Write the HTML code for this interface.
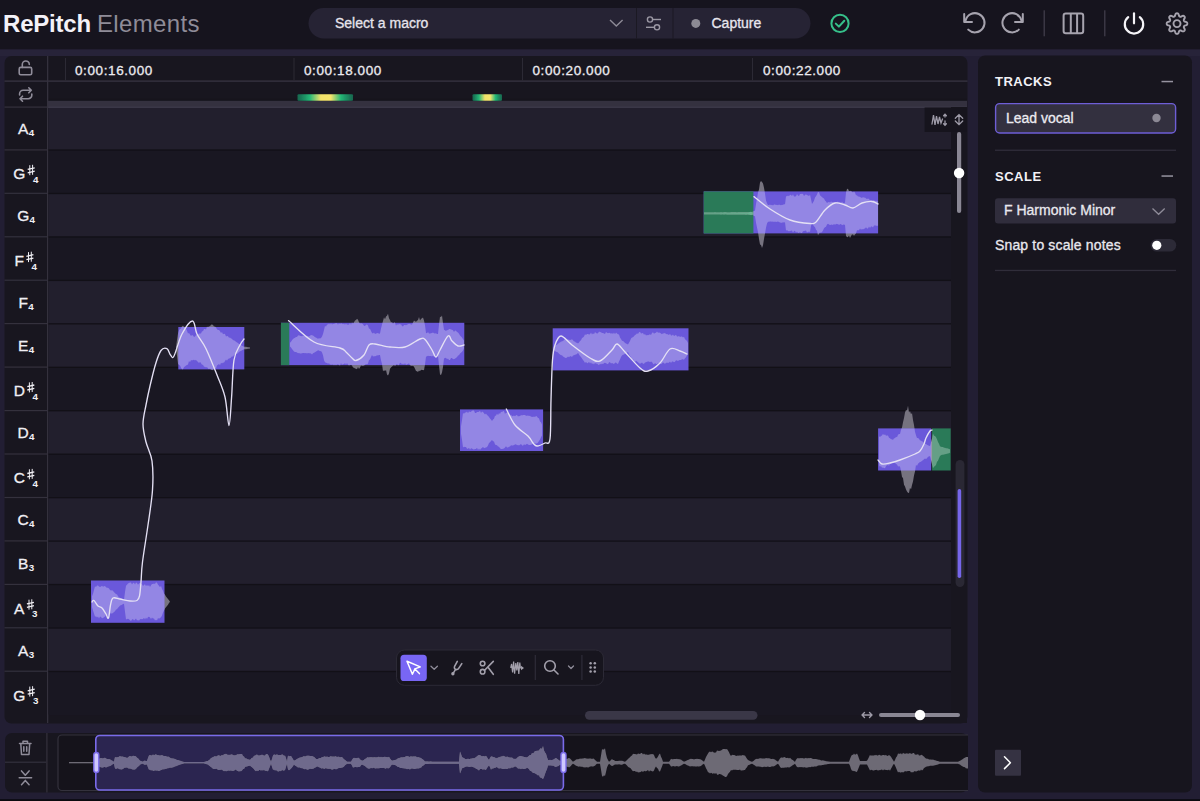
<!DOCTYPE html>
<html><head><meta charset="utf-8"><title>RePitch Elements</title>
<style>
html,body{margin:0;padding:0;width:1200px;height:801px;overflow:hidden;background:#110f17;}
svg{display:block;font-family:"Liberation Sans", sans-serif;}
.m{stroke:currentColor;stroke-width:0.3px;}
</style></head><body>
<svg width="1200" height="801" viewBox="0 0 1200 801">

<rect x="0" y="0" width="1200" height="801" fill="#221e33"/>
<rect x="0" y="0" width="1200" height="49.5" fill="#16141e"/>
<rect x="0" y="49.5" width="1200" height="6.5" fill="#272339"/>
<rect x="0" y="799.2" width="1200" height="1.8" fill="#0b0a0f"/>
<text x="3" y="32.4" font-size="24" font-weight="bold" fill="#f4f2f8" letter-spacing="-0.2">RePitch</text>
<text x="97" y="32.4" font-size="24" fill="#8f8c98" letter-spacing="0.35">Elements</text>
<rect x="308.5" y="8" width="502" height="30.5" rx="15.25" fill="#262334"/>
<rect x="636" y="8" width="1" height="30.5" fill="#1b1923"/>
<rect x="672.5" y="8" width="1" height="30.5" fill="#1b1923"/>
<text class="m" color="#e6e4ec" x="335" y="27.7" font-size="14" fill="#e6e4ec">Select a macro</text>
<path d="M610,20 L616.3,26 L622.6,20" fill="none" stroke="#8d8a96" stroke-width="1.4"/>
<g fill="none" stroke="#9b98a4" stroke-width="1.4"><circle cx="650" cy="19.5" r="2.6"/><path d="M652.6,19.5 H661"/><circle cx="657" cy="27.3" r="2.6"/><path d="M646,27.3 H654.4"/></g>
<circle cx="695.8" cy="23.4" r="4.5" fill="#8c8a94"/>
<text class="m" color="#e8e6ee" x="711.5" y="27.8" font-size="14" fill="#e8e6ee">Capture</text>
<circle cx="840" cy="23.4" r="8.6" fill="none" stroke="#36c08a" stroke-width="2"/>
<path d="M835.8,23.6 L838.9,26.6 L844.3,20.8" fill="none" stroke="#36c08a" stroke-width="2" stroke-linecap="round" stroke-linejoin="round"/>
<g fill="none" stroke="#a6a3ae" stroke-width="2" stroke-linecap="round" stroke-linejoin="round"><path d="M968.2,29.6 A9.6,9.6 0 1 0 965.6,20.6"/><path d="M964.2,14 V22 H972"/><path d="M1018.8,29.6 A9.6,9.6 0 1 1 1021.4,20.6"/><path d="M1022.8,14 V22 H1015"/></g>
<rect x="1043.5" y="10.3" width="1.5" height="26" fill="#3a3744"/>
<rect x="1104" y="10.3" width="1.5" height="26" fill="#3a3744"/>
<g fill="none" stroke="#a6a3ae" stroke-width="2"><rect x="1063.6" y="13.6" width="19.6" height="19.6" rx="2.2"/><path d="M1070.8,13.6 V33.2 M1077.1,13.6 V33.2"/></g>
<g fill="none" stroke="#f5f4f8" stroke-width="2.2" stroke-linecap="round"><path d="M1128.2,17.2 A9.2,9.2 0 1 0 1139.8,17.2"/><path d="M1134,13.4 V23.3"/></g>
<g fill="none" stroke="#a6a3ae" stroke-width="1.9" stroke-linejoin="round"><path d="M1187.30,23.60 L1187.28,23.92 L1187.20,24.24 L1187.06,24.55 L1186.80,24.84 L1186.40,25.09 L1185.87,25.29 L1185.31,25.46 L1184.83,25.61 L1184.49,25.77 L1184.26,25.96 L1184.10,26.15 L1183.98,26.36 L1183.89,26.58 L1183.82,26.81 L1183.80,27.06 L1183.83,27.36 L1183.96,27.71 L1184.19,28.16 L1184.47,28.68 L1184.70,29.20 L1184.81,29.65 L1184.78,30.04 L1184.67,30.36 L1184.50,30.64 L1184.28,30.88 L1184.04,31.10 L1183.76,31.27 L1183.44,31.38 L1183.05,31.41 L1182.60,31.30 L1182.08,31.07 L1181.56,30.79 L1181.11,30.56 L1180.76,30.43 L1180.46,30.40 L1180.21,30.42 L1179.98,30.49 L1179.76,30.58 L1179.55,30.70 L1179.36,30.86 L1179.17,31.09 L1179.01,31.43 L1178.86,31.91 L1178.69,32.47 L1178.49,33.00 L1178.24,33.40 L1177.95,33.66 L1177.64,33.80 L1177.32,33.88 L1177.00,33.90 L1176.68,33.88 L1176.36,33.80 L1176.05,33.66 L1175.76,33.40 L1175.51,33.00 L1175.31,32.47 L1175.14,31.91 L1174.99,31.43 L1174.83,31.09 L1174.64,30.86 L1174.45,30.70 L1174.24,30.58 L1174.02,30.49 L1173.79,30.42 L1173.54,30.40 L1173.24,30.43 L1172.89,30.56 L1172.44,30.79 L1171.92,31.07 L1171.40,31.30 L1170.95,31.41 L1170.56,31.38 L1170.24,31.27 L1169.96,31.10 L1169.72,30.88 L1169.50,30.64 L1169.33,30.36 L1169.22,30.04 L1169.19,29.65 L1169.30,29.20 L1169.53,28.68 L1169.81,28.16 L1170.04,27.71 L1170.17,27.36 L1170.20,27.06 L1170.18,26.81 L1170.11,26.58 L1170.02,26.36 L1169.90,26.15 L1169.74,25.96 L1169.51,25.77 L1169.17,25.61 L1168.69,25.46 L1168.13,25.29 L1167.60,25.09 L1167.20,24.84 L1166.94,24.55 L1166.80,24.24 L1166.72,23.92 L1166.70,23.60 L1166.72,23.28 L1166.80,22.96 L1166.94,22.65 L1167.20,22.36 L1167.60,22.11 L1168.13,21.91 L1168.69,21.74 L1169.17,21.59 L1169.51,21.43 L1169.74,21.24 L1169.90,21.05 L1170.02,20.84 L1170.11,20.62 L1170.18,20.39 L1170.20,20.14 L1170.17,19.84 L1170.04,19.49 L1169.81,19.04 L1169.53,18.52 L1169.30,18.00 L1169.19,17.55 L1169.22,17.16 L1169.33,16.84 L1169.50,16.56 L1169.72,16.32 L1169.96,16.10 L1170.24,15.93 L1170.56,15.82 L1170.95,15.79 L1171.40,15.90 L1171.92,16.13 L1172.44,16.41 L1172.89,16.64 L1173.24,16.77 L1173.54,16.80 L1173.79,16.78 L1174.02,16.71 L1174.24,16.62 L1174.45,16.50 L1174.64,16.34 L1174.83,16.11 L1174.99,15.77 L1175.14,15.29 L1175.31,14.73 L1175.51,14.20 L1175.76,13.80 L1176.05,13.54 L1176.36,13.40 L1176.68,13.32 L1177.00,13.30 L1177.32,13.32 L1177.64,13.40 L1177.95,13.54 L1178.24,13.80 L1178.49,14.20 L1178.69,14.73 L1178.86,15.29 L1179.01,15.77 L1179.17,16.11 L1179.36,16.34 L1179.55,16.50 L1179.76,16.62 L1179.98,16.71 L1180.21,16.78 L1180.46,16.80 L1180.76,16.77 L1181.11,16.64 L1181.56,16.41 L1182.08,16.13 L1182.60,15.90 L1183.05,15.79 L1183.44,15.82 L1183.76,15.93 L1184.04,16.10 L1184.28,16.32 L1184.50,16.56 L1184.67,16.84 L1184.78,17.16 L1184.81,17.55 L1184.70,18.00 L1184.47,18.52 L1184.19,19.04 L1183.96,19.49 L1183.83,19.84 L1183.80,20.14 L1183.82,20.39 L1183.89,20.62 L1183.98,20.84 L1184.10,21.05 L1184.26,21.24 L1184.49,21.43 L1184.83,21.59 L1185.31,21.74 L1185.87,21.91 L1186.40,22.11 L1186.80,22.36 L1187.06,22.65 L1187.20,22.96 L1187.28,23.28Z"/><circle cx="1177" cy="23.6" r="3.5"/></g>
<rect x="4.5" y="56" width="963" height="667.5" rx="7" fill="#18161f"/>
<rect x="4.5" y="80.5" width="963" height="1.2" fill="#3a3745"/>
<rect x="48" y="98.8" width="919" height="2" fill="#16141c"/>
<rect x="48" y="100.8" width="919" height="7.2" fill="#34313f"/><rect x="48" y="106.3" width="919" height="1.7" fill="#3a3747"/>
<rect x="4.5" y="106.5" width="43" height="1.2" fill="#34313d"/>
<rect x="47" y="56" width="1.3" height="667" fill="#34313d"/>
<rect x="65" y="58" width="1" height="22.5" fill="#2c2a35"/>
<rect x="293.5" y="58" width="1" height="22.5" fill="#2c2a35"/>
<rect x="522" y="58" width="1" height="22.5" fill="#2c2a35"/>
<rect x="752" y="58" width="1" height="22.5" fill="#2c2a35"/>
<text class="m" color="#ecebf0" x="75" y="75" font-size="13.5" fill="#ecebf0" letter-spacing="0.6">0:00:16.000</text>
<text class="m" color="#ecebf0" x="304" y="75" font-size="13.5" fill="#ecebf0" letter-spacing="0.6">0:00:18.000</text>
<text class="m" color="#ecebf0" x="532.5" y="75" font-size="13.5" fill="#ecebf0" letter-spacing="0.6">0:00:20.000</text>
<text class="m" color="#ecebf0" x="763" y="75" font-size="13.5" fill="#ecebf0" letter-spacing="0.6">0:00:22.000</text>
<defs><linearGradient id="heat" x1="0" x2="1" y1="0" y2="0"><stop offset="0" stop-color="#167a5a" stop-opacity="0.8"/><stop offset="0.22" stop-color="#24b877"/><stop offset="0.42" stop-color="#f2e26a"/><stop offset="0.6" stop-color="#f4e46c"/><stop offset="0.78" stop-color="#24b877"/><stop offset="1" stop-color="#167a5a" stop-opacity="0.8"/></linearGradient><filter id="blur1" x="-20%" y="-60%" width="140%" height="220%"><feGaussianBlur stdDeviation="0.7"/></filter></defs>
<rect x="297.5" y="94.3" width="55.5" height="6.4" rx="1" fill="url(#heat)" filter="url(#blur1)"/>
<rect x="472.5" y="94.3" width="29.5" height="6.4" rx="1" fill="url(#heat)" filter="url(#blur1)"/>
<g fill="none" stroke="#8f8c99" stroke-width="1.6" stroke-linecap="round" stroke-linejoin="round"><rect x="19.2" y="67.4" width="12.5" height="7.4" rx="1.5"/><path d="M22.3,67.4 V64.6 A3.5,3.5 0 0 1 29.3,64.4"/><path d="M19.6,95 V93.8 A3.5,3.5 0 0 1 23.1,90.3 H31.3 M28.8,87.8 L31.3,90.3 L28.8,92.8"/><path d="M31.8,94 V95.2 A3.5,3.5 0 0 1 28.3,98.7 H20 M22.5,96.2 L20,98.7 L22.5,101.2"/></g>
<clipPath id="gridclip"><rect x="48.3" y="108" width="903" height="615.5"/></clipPath>
<g clip-path="url(#gridclip)">
<rect x="48.3" y="106.4" width="903" height="44.1" rx="2" fill="#221f2d"/>
<rect x="48.3" y="149.9" width="903" height="44.1" rx="2" fill="#191722"/>
<rect x="48.3" y="149.40" width="903" height="1.3" fill="#121017"/>
<rect x="48.3" y="193.3" width="903" height="44.1" rx="2" fill="#221f2d"/>
<rect x="48.3" y="192.85" width="903" height="1.3" fill="#121017"/>
<rect x="48.3" y="236.8" width="903" height="44.1" rx="2" fill="#191722"/>
<rect x="48.3" y="236.30" width="903" height="1.3" fill="#121017"/>
<rect x="48.3" y="280.2" width="903" height="44.1" rx="2" fill="#221f2d"/>
<rect x="48.3" y="279.75" width="903" height="1.3" fill="#121017"/>
<rect x="48.3" y="323.6" width="903" height="44.1" rx="2" fill="#221f2d"/>
<rect x="48.3" y="323.20" width="903" height="1.3" fill="#121017"/>
<rect x="48.3" y="367.1" width="903" height="44.1" rx="2" fill="#191722"/>
<rect x="48.3" y="366.65" width="903" height="1.3" fill="#121017"/>
<rect x="48.3" y="410.6" width="903" height="44.1" rx="2" fill="#221f2d"/>
<rect x="48.3" y="410.10" width="903" height="1.3" fill="#121017"/>
<rect x="48.3" y="454.0" width="903" height="44.1" rx="2" fill="#191722"/>
<rect x="48.3" y="453.55" width="903" height="1.3" fill="#121017"/>
<rect x="48.3" y="497.5" width="903" height="44.1" rx="2" fill="#221f2d"/>
<rect x="48.3" y="497.00" width="903" height="1.3" fill="#121017"/>
<rect x="48.3" y="540.9" width="903" height="44.1" rx="2" fill="#221f2d"/>
<rect x="48.3" y="540.45" width="903" height="1.3" fill="#121017"/>
<rect x="48.3" y="584.4" width="903" height="44.1" rx="2" fill="#191722"/>
<rect x="48.3" y="583.90" width="903" height="1.3" fill="#121017"/>
<rect x="48.3" y="627.8" width="903" height="44.1" rx="2" fill="#221f2d"/>
<rect x="48.3" y="627.35" width="903" height="1.3" fill="#121017"/>
<rect x="48.3" y="671.2" width="903" height="44.1" rx="2" fill="#191722"/>
<rect x="48.3" y="670.80" width="903" height="1.3" fill="#121017"/>
</g>
<text x="18.0" y="133.7" font-size="15.5" fill="#f0eff4" class="m" color="#f0eff4">A</text>
<text x="28.7" y="135.7" font-size="9.8" font-weight="bold" fill="#f0eff4">4</text>
<rect x="4.5" y="149.3" width="43" height="1.2" fill="#34313d"/>
<text x="13.3" y="179.2" font-size="15.5" fill="#f0eff4" class="m" color="#f0eff4">G</text>
<path d="M29.8,165.2 V175.2 M32.6,164.8 V174.8" stroke="#f0eff4" stroke-width="1.0" fill="none"/>
<path d="M27.7,169.4 L34.7,167.8 M27.7,172.8 L34.7,171.2" stroke="#f0eff4" stroke-width="1.35" fill="none"/>
<text x="32.9" y="182.8" font-size="9.8" font-weight="bold" fill="#f0eff4">4</text>
<rect x="4.5" y="192.7" width="43" height="1.2" fill="#34313d"/>
<text x="17.2" y="220.8" font-size="15.5" fill="#f0eff4" class="m" color="#f0eff4">G</text>
<text x="29.5" y="222.8" font-size="9.8" font-weight="bold" fill="#f0eff4">4</text>
<rect x="4.5" y="236.2" width="43" height="1.2" fill="#34313d"/>
<text x="14.6" y="266.1" font-size="15.5" fill="#f0eff4" class="m" color="#f0eff4">F</text>
<path d="M28.5,252.1 V262.1 M31.3,251.7 V261.7" stroke="#f0eff4" stroke-width="1.0" fill="none"/>
<path d="M26.4,256.3 L33.4,254.7 M26.4,259.7 L33.4,258.1" stroke="#f0eff4" stroke-width="1.35" fill="none"/>
<text x="31.6" y="269.7" font-size="9.8" font-weight="bold" fill="#f0eff4">4</text>
<rect x="4.5" y="279.6" width="43" height="1.2" fill="#34313d"/>
<text x="18.5" y="307.8" font-size="15.5" fill="#f0eff4" class="m" color="#f0eff4">F</text>
<text x="28.2" y="309.8" font-size="9.8" font-weight="bold" fill="#f0eff4">4</text>
<rect x="4.5" y="323.0" width="43" height="1.2" fill="#34313d"/>
<text x="18.0" y="351.3" font-size="15.5" fill="#f0eff4" class="m" color="#f0eff4">E</text>
<text x="28.7" y="353.3" font-size="9.8" font-weight="bold" fill="#f0eff4">4</text>
<rect x="4.5" y="366.5" width="43" height="1.2" fill="#34313d"/>
<text x="13.7" y="396.4" font-size="15.5" fill="#f0eff4" class="m" color="#f0eff4">D</text>
<path d="M29.4,382.4 V392.4 M32.2,382.0 V392.0" stroke="#f0eff4" stroke-width="1.0" fill="none"/>
<path d="M27.3,386.6 L34.3,385.0 M27.3,390.0 L34.3,388.4" stroke="#f0eff4" stroke-width="1.35" fill="none"/>
<text x="32.5" y="400.0" font-size="9.8" font-weight="bold" fill="#f0eff4">4</text>
<rect x="4.5" y="410.0" width="43" height="1.2" fill="#34313d"/>
<text x="17.6" y="438.4" font-size="15.5" fill="#f0eff4" class="m" color="#f0eff4">D</text>
<text x="29.1" y="440.4" font-size="9.8" font-weight="bold" fill="#f0eff4">4</text>
<rect x="4.5" y="453.4" width="43" height="1.2" fill="#34313d"/>
<text x="13.7" y="483.3" font-size="15.5" fill="#f0eff4" class="m" color="#f0eff4">C</text>
<path d="M29.4,469.3 V479.3 M32.2,468.9 V478.9" stroke="#f0eff4" stroke-width="1.0" fill="none"/>
<path d="M27.3,473.5 L34.3,471.9 M27.3,476.9 L34.3,475.3" stroke="#f0eff4" stroke-width="1.35" fill="none"/>
<text x="32.5" y="486.9" font-size="9.8" font-weight="bold" fill="#f0eff4">4</text>
<rect x="4.5" y="496.9" width="43" height="1.2" fill="#34313d"/>
<text x="17.6" y="525.4" font-size="15.5" fill="#f0eff4" class="m" color="#f0eff4">C</text>
<text x="29.1" y="527.4" font-size="9.8" font-weight="bold" fill="#f0eff4">4</text>
<rect x="4.5" y="540.3" width="43" height="1.2" fill="#34313d"/>
<text x="18.0" y="568.9" font-size="15.5" fill="#f0eff4" class="m" color="#f0eff4">B</text>
<text x="28.7" y="570.9" font-size="9.8" font-weight="bold" fill="#f0eff4">3</text>
<rect x="4.5" y="583.8" width="43" height="1.2" fill="#34313d"/>
<text x="14.1" y="613.7" font-size="15.5" fill="#f0eff4" class="m" color="#f0eff4">A</text>
<path d="M29.0,599.7 V609.7 M31.8,599.3 V609.3" stroke="#f0eff4" stroke-width="1.0" fill="none"/>
<path d="M26.9,603.9 L33.9,602.3 M26.9,607.3 L33.9,605.7" stroke="#f0eff4" stroke-width="1.35" fill="none"/>
<text x="32.1" y="617.3" font-size="9.8" font-weight="bold" fill="#f0eff4">3</text>
<rect x="4.5" y="627.2" width="43" height="1.2" fill="#34313d"/>
<text x="18.0" y="656.0" font-size="15.5" fill="#f0eff4" class="m" color="#f0eff4">A</text>
<text x="28.7" y="658.0" font-size="9.8" font-weight="bold" fill="#f0eff4">3</text>
<rect x="4.5" y="670.6" width="43" height="1.2" fill="#34313d"/>
<text x="13.3" y="700.6" font-size="15.5" fill="#f0eff4" class="m" color="#f0eff4">G</text>
<path d="M29.8,686.6 V696.6 M32.6,686.2 V696.2" stroke="#f0eff4" stroke-width="1.0" fill="none"/>
<path d="M27.7,690.8 L34.7,689.2 M27.7,694.2 L34.7,692.6" stroke="#f0eff4" stroke-width="1.35" fill="none"/>
<text x="32.9" y="704.2" font-size="9.8" font-weight="bold" fill="#f0eff4">3</text>
<rect x="951" y="107" width="16" height="616" fill="#18161f"/>
<rect x="924.6" y="107.5" width="42.4" height="24.5" fill="#16141d"/>
<g fill="none" stroke="#9e9ba8" stroke-width="1.3" stroke-linecap="round"><path d="M932,124 L933.5,115 L935,125 L936.5,116 L938,124 L939.5,117 L941,123 L942.5,119"/><path d="M945,114.5 V117 M945,121 V125 M943.6,115.8 L945,114.3 L946.4,115.8 M943.6,123.7 L945,125.2 L946.4,123.7"/><path d="M959,115.2 V124 M955.3,118.3 L959,114.6 L962.7,118.3 M955.3,121 L959,124.7 L962.7,121"/></g>
<rect x="957" y="132" width="4.2" height="81" rx="2.1" fill="#8a8794"/>
<circle cx="959.1" cy="173" r="5.2" fill="#ffffff"/>
<rect x="955.6" y="460" width="8.8" height="127" rx="4.4" fill="#2a2834"/>
<rect x="957.6" y="489" width="3.6" height="89" rx="1.8" fill="#7666ea"/>
<rect x="585" y="711" width="172.5" height="8.7" rx="4.35" fill="#3a3747"/>
<g fill="none" stroke="#9e9ba8" stroke-width="1.4" stroke-linecap="round" stroke-linejoin="round"><path d="M862,715 H872 M864.5,712.5 L862,715 L864.5,717.5 M869.5,712.5 L872,715 L869.5,717.5"/></g>
<rect x="879" y="713" width="81" height="4" rx="2" fill="#8a8794"/>
<circle cx="920" cy="715" r="5.2" fill="#ffffff"/>
<clipPath id="n11"><rect x="91" y="580.5" width="73.5" height="42.299999999999955"/></clipPath>
<path d="M92.0,596.2 L93.0,593.7 L94.0,590.0 L95.0,586.2 L96.0,587.0 L97.0,585.6 L98.0,585.4 L99.0,586.6 L100.0,587.1 L101.0,586.6 L102.0,585.7 L103.0,586.8 L104.0,586.2 L105.0,586.1 L106.0,587.3 L107.0,587.7 L108.0,587.8 L109.0,588.4 L110.0,590.1 L111.0,590.5 L112.0,590.2 L113.0,590.8 L114.0,592.2 L115.0,593.0 L116.0,594.2 L117.0,594.2 L118.0,596.2 L119.0,597.3 L120.0,597.8 L121.0,598.7 L122.0,598.8 L123.0,599.6 L124.0,599.8 L125.0,591.9 L126.0,585.8 L127.0,584.8 L128.0,583.5 L129.0,583.0 L130.0,582.5 L131.0,582.4 L132.0,584.6 L133.0,582.9 L134.0,582.7 L135.0,584.6 L136.0,582.6 L137.0,583.0 L138.0,584.7 L139.0,583.5 L140.0,583.0 L141.0,583.6 L142.0,584.2 L143.0,585.9 L144.0,585.1 L145.0,584.3 L146.0,586.3 L147.0,584.8 L148.0,586.2 L149.0,585.1 L150.0,586.9 L151.0,585.3 L152.0,583.9 L153.0,583.9 L154.0,583.5 L155.0,583.9 L156.0,582.3 L157.0,582.8 L158.0,584.8 L159.0,585.7 L160.0,587.2 L161.0,585.8 L162.0,589.0 L163.0,590.7 L164.0,593.5 L165.0,594.7 L166.0,596.6 L167.0,597.7 L168.0,598.9 L169.0,600.3 L170.0,601.8 L170.0,601.8 L169.0,603.1 L168.0,604.8 L167.0,605.9 L166.0,607.2 L165.0,608.4 L164.0,610.6 L163.0,612.5 L162.0,615.4 L161.0,617.2 L160.0,618.1 L159.0,618.7 L158.0,618.0 L157.0,620.4 L156.0,619.8 L155.0,620.5 L154.0,618.6 L153.0,618.5 L152.0,617.4 L151.0,619.0 L150.0,617.4 L149.0,616.7 L148.0,616.9 L147.0,618.9 L146.0,617.6 L145.0,619.4 L144.0,617.8 L143.0,619.0 L142.0,619.2 L141.0,619.0 L140.0,619.2 L139.0,620.7 L138.0,620.1 L137.0,620.4 L136.0,618.6 L135.0,619.6 L134.0,620.4 L133.0,619.1 L132.0,619.5 L131.0,621.0 L130.0,620.2 L129.0,619.3 L128.0,618.7 L127.0,619.0 L126.0,619.4 L125.0,611.7 L124.0,603.7 L123.0,604.0 L122.0,604.7 L121.0,605.2 L120.0,605.4 L119.0,606.7 L118.0,607.8 L117.0,609.2 L116.0,609.6 L115.0,611.3 L114.0,611.9 L113.0,613.1 L112.0,613.6 L111.0,613.4 L110.0,613.5 L109.0,615.5 L108.0,615.4 L107.0,615.7 L106.0,615.5 L105.0,616.5 L104.0,617.3 L103.0,617.9 L102.0,618.3 L101.0,617.1 L100.0,616.5 L99.0,618.5 L98.0,616.5 L97.0,617.5 L96.0,616.2 L95.0,616.7 L94.0,613.4 L93.0,610.5 L92.0,607.3Z" fill="#76737f"/>
<rect x="91" y="580.5" width="73.5" height="42.299999999999955" fill="#6a58da"/>
<path d="M92.0,596.2 L93.0,593.7 L94.0,590.0 L95.0,586.2 L96.0,587.0 L97.0,585.6 L98.0,585.4 L99.0,586.6 L100.0,587.1 L101.0,586.6 L102.0,585.7 L103.0,586.8 L104.0,586.2 L105.0,586.1 L106.0,587.3 L107.0,587.7 L108.0,587.8 L109.0,588.4 L110.0,590.1 L111.0,590.5 L112.0,590.2 L113.0,590.8 L114.0,592.2 L115.0,593.0 L116.0,594.2 L117.0,594.2 L118.0,596.2 L119.0,597.3 L120.0,597.8 L121.0,598.7 L122.0,598.8 L123.0,599.6 L124.0,599.8 L125.0,591.9 L126.0,585.8 L127.0,584.8 L128.0,583.5 L129.0,583.0 L130.0,582.5 L131.0,582.4 L132.0,584.6 L133.0,582.9 L134.0,582.7 L135.0,584.6 L136.0,582.6 L137.0,583.0 L138.0,584.7 L139.0,583.5 L140.0,583.0 L141.0,583.6 L142.0,584.2 L143.0,585.9 L144.0,585.1 L145.0,584.3 L146.0,586.3 L147.0,584.8 L148.0,586.2 L149.0,585.1 L150.0,586.9 L151.0,585.3 L152.0,583.9 L153.0,583.9 L154.0,583.5 L155.0,583.9 L156.0,582.3 L157.0,582.8 L158.0,584.8 L159.0,585.7 L160.0,587.2 L161.0,585.8 L162.0,589.0 L163.0,590.7 L164.0,593.5 L165.0,594.7 L166.0,596.6 L167.0,597.7 L168.0,598.9 L169.0,600.3 L170.0,601.8 L170.0,601.8 L169.0,603.1 L168.0,604.8 L167.0,605.9 L166.0,607.2 L165.0,608.4 L164.0,610.6 L163.0,612.5 L162.0,615.4 L161.0,617.2 L160.0,618.1 L159.0,618.7 L158.0,618.0 L157.0,620.4 L156.0,619.8 L155.0,620.5 L154.0,618.6 L153.0,618.5 L152.0,617.4 L151.0,619.0 L150.0,617.4 L149.0,616.7 L148.0,616.9 L147.0,618.9 L146.0,617.6 L145.0,619.4 L144.0,617.8 L143.0,619.0 L142.0,619.2 L141.0,619.0 L140.0,619.2 L139.0,620.7 L138.0,620.1 L137.0,620.4 L136.0,618.6 L135.0,619.6 L134.0,620.4 L133.0,619.1 L132.0,619.5 L131.0,621.0 L130.0,620.2 L129.0,619.3 L128.0,618.7 L127.0,619.0 L126.0,619.4 L125.0,611.7 L124.0,603.7 L123.0,604.0 L122.0,604.7 L121.0,605.2 L120.0,605.4 L119.0,606.7 L118.0,607.8 L117.0,609.2 L116.0,609.6 L115.0,611.3 L114.0,611.9 L113.0,613.1 L112.0,613.6 L111.0,613.4 L110.0,613.5 L109.0,615.5 L108.0,615.4 L107.0,615.7 L106.0,615.5 L105.0,616.5 L104.0,617.3 L103.0,617.9 L102.0,618.3 L101.0,617.1 L100.0,616.5 L99.0,618.5 L98.0,616.5 L97.0,617.5 L96.0,616.2 L95.0,616.7 L94.0,613.4 L93.0,610.5 L92.0,607.3Z" fill="#ffffff" fill-opacity="0.28" clip-path="url(#n11)"/>
<clipPath id="n12"><rect x="178.3" y="327" width="66.0" height="42.39999999999998"/></clipPath>
<path d="M176.0,347.0 L177.0,340.1 L178.0,333.5 L179.0,330.2 L180.0,329.0 L181.0,328.5 L182.0,326.3 L183.0,325.8 L184.0,326.7 L185.0,327.2 L186.0,328.7 L187.0,330.8 L188.0,333.4 L189.0,333.1 L190.0,334.6 L191.0,336.1 L192.0,335.0 L193.0,335.6 L194.0,337.0 L195.0,336.6 L196.0,335.0 L197.0,334.8 L198.0,334.6 L199.0,333.5 L200.0,333.6 L201.0,333.5 L202.0,331.2 L203.0,331.3 L204.0,329.0 L205.0,328.9 L206.0,329.4 L207.0,326.6 L208.0,327.3 L209.0,326.2 L210.0,326.3 L211.0,324.8 L212.0,324.6 L213.0,324.9 L214.0,326.6 L215.0,326.4 L216.0,327.6 L217.0,329.2 L218.0,330.0 L219.0,329.9 L220.0,331.2 L221.0,332.9 L222.0,332.0 L223.0,334.3 L224.0,333.7 L225.0,334.0 L226.0,336.4 L227.0,336.0 L228.0,336.3 L229.0,337.7 L230.0,337.4 L231.0,338.4 L232.0,338.8 L233.0,340.3 L234.0,340.2 L235.0,340.9 L236.0,341.8 L237.0,342.6 L238.0,343.0 L239.0,343.9 L240.0,344.3 L241.0,345.2 L242.0,345.7 L243.0,346.2 L244.0,346.7 L245.0,346.8 L246.0,346.8 L247.0,347.0 L248.0,347.2 L249.0,347.3 L250.0,347.5 L250.0,348.5 L249.0,348.7 L248.0,348.8 L247.0,349.0 L246.0,349.2 L245.0,349.3 L244.0,349.3 L243.0,349.8 L242.0,350.2 L241.0,350.9 L240.0,351.3 L239.0,352.1 L238.0,353.1 L237.0,353.8 L236.0,354.1 L235.0,354.4 L234.0,355.1 L233.0,356.7 L232.0,356.3 L231.0,357.4 L230.0,358.2 L229.0,358.6 L228.0,358.9 L227.0,360.8 L226.0,359.6 L225.0,360.9 L224.0,362.7 L223.0,362.6 L222.0,363.4 L221.0,362.7 L220.0,365.2 L219.0,364.1 L218.0,364.7 L217.0,365.5 L216.0,368.2 L215.0,368.4 L214.0,368.5 L213.0,370.3 L212.0,369.7 L211.0,369.7 L210.0,368.5 L209.0,369.2 L208.0,368.4 L207.0,367.0 L206.0,367.5 L205.0,366.7 L204.0,366.7 L203.0,364.8 L202.0,364.8 L201.0,363.3 L200.0,361.8 L199.0,363.3 L198.0,361.7 L197.0,361.2 L196.0,359.8 L195.0,360.6 L194.0,359.7 L193.0,360.0 L192.0,360.4 L191.0,360.0 L190.0,362.2 L189.0,361.1 L188.0,364.5 L187.0,365.0 L186.0,365.6 L185.0,366.6 L184.0,367.1 L183.0,369.3 L182.0,369.3 L181.0,367.8 L180.0,365.5 L179.0,364.9 L178.0,363.7 L177.0,355.7 L176.0,349.0Z" fill="#76737f"/>
<rect x="178.3" y="327" width="66.0" height="42.39999999999998" fill="#6a58da"/>
<path d="M176.0,347.0 L177.0,340.1 L178.0,333.5 L179.0,330.2 L180.0,329.0 L181.0,328.5 L182.0,326.3 L183.0,325.8 L184.0,326.7 L185.0,327.2 L186.0,328.7 L187.0,330.8 L188.0,333.4 L189.0,333.1 L190.0,334.6 L191.0,336.1 L192.0,335.0 L193.0,335.6 L194.0,337.0 L195.0,336.6 L196.0,335.0 L197.0,334.8 L198.0,334.6 L199.0,333.5 L200.0,333.6 L201.0,333.5 L202.0,331.2 L203.0,331.3 L204.0,329.0 L205.0,328.9 L206.0,329.4 L207.0,326.6 L208.0,327.3 L209.0,326.2 L210.0,326.3 L211.0,324.8 L212.0,324.6 L213.0,324.9 L214.0,326.6 L215.0,326.4 L216.0,327.6 L217.0,329.2 L218.0,330.0 L219.0,329.9 L220.0,331.2 L221.0,332.9 L222.0,332.0 L223.0,334.3 L224.0,333.7 L225.0,334.0 L226.0,336.4 L227.0,336.0 L228.0,336.3 L229.0,337.7 L230.0,337.4 L231.0,338.4 L232.0,338.8 L233.0,340.3 L234.0,340.2 L235.0,340.9 L236.0,341.8 L237.0,342.6 L238.0,343.0 L239.0,343.9 L240.0,344.3 L241.0,345.2 L242.0,345.7 L243.0,346.2 L244.0,346.7 L245.0,346.8 L246.0,346.8 L247.0,347.0 L248.0,347.2 L249.0,347.3 L250.0,347.5 L250.0,348.5 L249.0,348.7 L248.0,348.8 L247.0,349.0 L246.0,349.2 L245.0,349.3 L244.0,349.3 L243.0,349.8 L242.0,350.2 L241.0,350.9 L240.0,351.3 L239.0,352.1 L238.0,353.1 L237.0,353.8 L236.0,354.1 L235.0,354.4 L234.0,355.1 L233.0,356.7 L232.0,356.3 L231.0,357.4 L230.0,358.2 L229.0,358.6 L228.0,358.9 L227.0,360.8 L226.0,359.6 L225.0,360.9 L224.0,362.7 L223.0,362.6 L222.0,363.4 L221.0,362.7 L220.0,365.2 L219.0,364.1 L218.0,364.7 L217.0,365.5 L216.0,368.2 L215.0,368.4 L214.0,368.5 L213.0,370.3 L212.0,369.7 L211.0,369.7 L210.0,368.5 L209.0,369.2 L208.0,368.4 L207.0,367.0 L206.0,367.5 L205.0,366.7 L204.0,366.7 L203.0,364.8 L202.0,364.8 L201.0,363.3 L200.0,361.8 L199.0,363.3 L198.0,361.7 L197.0,361.2 L196.0,359.8 L195.0,360.6 L194.0,359.7 L193.0,360.0 L192.0,360.4 L191.0,360.0 L190.0,362.2 L189.0,361.1 L188.0,364.5 L187.0,365.0 L186.0,365.6 L185.0,366.6 L184.0,367.1 L183.0,369.3 L182.0,369.3 L181.0,367.8 L180.0,365.5 L179.0,364.9 L178.0,363.7 L177.0,355.7 L176.0,349.0Z" fill="#ffffff" fill-opacity="0.28" clip-path="url(#n12)"/>
<clipPath id="n13"><rect x="280.9" y="322.8" width="183.40000000000003" height="42.30000000000001"/></clipPath>
<path d="M290.0,342.7 L291.0,341.7 L292.0,340.2 L293.0,339.0 L294.0,338.3 L295.0,337.7 L296.0,336.9 L297.0,337.1 L298.0,335.6 L299.0,335.3 L300.0,335.7 L301.0,335.9 L302.0,336.2 L303.0,335.4 L304.0,335.9 L305.0,336.2 L306.0,336.1 L307.0,335.8 L308.0,336.3 L309.0,336.4 L310.0,335.7 L311.0,335.0 L312.0,335.2 L313.0,335.5 L314.0,336.2 L315.0,337.3 L316.0,337.4 L317.0,338.2 L318.0,338.8 L319.0,338.2 L320.0,338.5 L321.0,337.9 L322.0,336.6 L323.0,334.0 L324.0,330.0 L325.0,325.8 L326.0,326.7 L327.0,324.4 L328.0,324.5 L329.0,323.4 L330.0,324.5 L331.0,323.3 L332.0,324.5 L333.0,323.9 L334.0,323.9 L335.0,323.4 L336.0,323.3 L337.0,323.3 L338.0,324.8 L339.0,323.3 L340.0,324.3 L341.0,323.3 L342.0,323.8 L343.0,324.3 L344.0,323.8 L345.0,324.7 L346.0,323.4 L347.0,324.7 L348.0,324.6 L349.0,324.8 L350.0,322.7 L351.0,324.9 L352.0,322.3 L353.0,323.7 L354.0,322.3 L355.0,320.6 L356.0,319.9 L357.0,318.7 L358.0,319.7 L359.0,322.2 L360.0,323.6 L361.0,323.3 L362.0,323.6 L363.0,324.3 L364.0,325.8 L365.0,326.0 L366.0,324.8 L367.0,324.4 L368.0,325.6 L369.0,328.8 L370.0,328.7 L371.0,330.9 L372.0,333.1 L373.0,333.5 L374.0,332.6 L375.0,334.1 L376.0,333.4 L377.0,333.2 L378.0,333.0 L379.0,333.7 L380.0,333.5 L381.0,328.6 L382.0,324.5 L383.0,321.0 L384.0,317.3 L385.0,319.3 L386.0,316.4 L387.0,315.7 L388.0,313.8 L389.0,318.3 L390.0,319.9 L391.0,322.5 L392.0,322.0 L393.0,323.8 L394.0,322.5 L395.0,322.4 L396.0,325.7 L397.0,323.9 L398.0,324.9 L399.0,323.7 L400.0,324.6 L401.0,324.3 L402.0,326.1 L403.0,326.5 L404.0,325.0 L405.0,325.0 L406.0,325.2 L407.0,324.7 L408.0,324.2 L409.0,323.7 L410.0,324.1 L411.0,324.4 L412.0,324.5 L413.0,322.4 L414.0,320.5 L415.0,321.3 L416.0,321.7 L417.0,320.7 L418.0,319.9 L419.0,317.0 L420.0,320.5 L421.0,319.0 L422.0,318.2 L423.0,317.5 L424.0,320.5 L425.0,325.2 L426.0,332.9 L427.0,333.3 L428.0,331.9 L429.0,333.5 L430.0,333.4 L431.0,333.3 L432.0,333.1 L433.0,332.4 L434.0,333.3 L435.0,333.5 L436.0,333.3 L437.0,334.0 L438.0,334.0 L439.0,324.4 L440.0,316.8 L441.0,316.9 L442.0,315.6 L443.0,323.3 L444.0,329.8 L445.0,330.3 L446.0,331.0 L447.0,330.1 L448.0,330.2 L449.0,328.9 L450.0,328.9 L451.0,329.6 L452.0,329.7 L453.0,330.2 L454.0,331.9 L455.0,330.5 L456.0,330.7 L457.0,332.0 L458.0,332.6 L459.0,333.7 L460.0,335.4 L461.0,336.4 L462.0,337.4 L463.0,339.3 L464.0,340.6 L464.0,348.3 L463.0,350.5 L462.0,351.7 L461.0,352.7 L460.0,353.4 L459.0,355.2 L458.0,355.4 L457.0,357.3 L456.0,357.8 L455.0,358.7 L454.0,359.1 L453.0,359.2 L452.0,357.9 L451.0,358.1 L450.0,359.9 L449.0,360.0 L448.0,358.6 L447.0,359.2 L446.0,357.8 L445.0,358.0 L444.0,358.6 L443.0,366.9 L442.0,372.5 L441.0,375.1 L440.0,374.6 L439.0,365.3 L438.0,355.8 L437.0,356.0 L436.0,355.4 L435.0,355.8 L434.0,356.8 L433.0,355.8 L432.0,356.6 L431.0,356.0 L430.0,356.1 L429.0,355.9 L428.0,355.8 L427.0,356.2 L426.0,356.8 L425.0,364.5 L424.0,370.3 L423.0,370.1 L422.0,369.9 L421.0,369.8 L420.0,371.3 L419.0,370.5 L418.0,372.0 L417.0,371.3 L416.0,370.9 L415.0,368.7 L414.0,366.8 L413.0,365.8 L412.0,366.0 L411.0,365.7 L410.0,365.3 L409.0,363.2 L408.0,363.9 L407.0,364.2 L406.0,365.0 L405.0,362.9 L404.0,364.8 L403.0,363.4 L402.0,364.4 L401.0,363.1 L400.0,362.8 L399.0,364.8 L398.0,365.6 L397.0,363.7 L396.0,365.1 L395.0,366.1 L394.0,365.1 L393.0,365.7 L392.0,366.5 L391.0,367.4 L390.0,368.8 L389.0,373.4 L388.0,375.5 L387.0,374.4 L386.0,370.0 L385.0,371.1 L384.0,370.3 L383.0,371.2 L382.0,364.0 L381.0,360.2 L380.0,355.1 L379.0,355.0 L378.0,355.4 L377.0,355.3 L376.0,356.0 L375.0,356.3 L374.0,356.2 L373.0,356.4 L372.0,355.1 L371.0,357.0 L370.0,359.4 L369.0,360.1 L368.0,363.4 L367.0,364.6 L366.0,364.1 L365.0,365.0 L364.0,365.6 L363.0,365.9 L362.0,365.7 L361.0,365.6 L360.0,367.6 L359.0,369.0 L358.0,367.1 L357.0,369.2 L356.0,368.8 L355.0,368.5 L354.0,367.7 L353.0,367.5 L352.0,365.5 L351.0,364.8 L350.0,365.1 L349.0,365.5 L348.0,364.8 L347.0,363.1 L346.0,364.8 L345.0,363.1 L344.0,364.3 L343.0,364.0 L342.0,364.9 L341.0,362.9 L340.0,365.7 L339.0,364.7 L338.0,364.4 L337.0,364.2 L336.0,365.5 L335.0,364.2 L334.0,365.4 L333.0,364.2 L332.0,364.7 L331.0,364.6 L330.0,364.4 L329.0,363.3 L328.0,363.7 L327.0,362.9 L326.0,362.7 L325.0,362.2 L324.0,360.2 L323.0,355.2 L322.0,352.4 L321.0,351.1 L320.0,351.2 L319.0,350.5 L318.0,350.3 L317.0,351.0 L316.0,351.4 L315.0,352.2 L314.0,352.7 L313.0,353.3 L312.0,354.4 L311.0,353.5 L310.0,353.3 L309.0,353.2 L308.0,352.9 L307.0,353.6 L306.0,353.1 L305.0,353.2 L304.0,352.9 L303.0,353.0 L302.0,353.2 L301.0,353.4 L300.0,353.5 L299.0,352.9 L298.0,353.3 L297.0,352.4 L296.0,352.1 L295.0,351.9 L294.0,351.5 L293.0,350.2 L292.0,349.0 L291.0,347.5 L290.0,346.4Z" fill="#76737f"/>
<rect x="281" y="322.8" width="183.3" height="42.30000000000001" fill="#6a58da"/>
<rect x="280.9" y="322.8" width="8.400000000000034" height="42.30000000000001" fill="#2a7a58"/>
<path d="M290.0,342.7 L291.0,341.7 L292.0,340.2 L293.0,339.0 L294.0,338.3 L295.0,337.7 L296.0,336.9 L297.0,337.1 L298.0,335.6 L299.0,335.3 L300.0,335.7 L301.0,335.9 L302.0,336.2 L303.0,335.4 L304.0,335.9 L305.0,336.2 L306.0,336.1 L307.0,335.8 L308.0,336.3 L309.0,336.4 L310.0,335.7 L311.0,335.0 L312.0,335.2 L313.0,335.5 L314.0,336.2 L315.0,337.3 L316.0,337.4 L317.0,338.2 L318.0,338.8 L319.0,338.2 L320.0,338.5 L321.0,337.9 L322.0,336.6 L323.0,334.0 L324.0,330.0 L325.0,325.8 L326.0,326.7 L327.0,324.4 L328.0,324.5 L329.0,323.4 L330.0,324.5 L331.0,323.3 L332.0,324.5 L333.0,323.9 L334.0,323.9 L335.0,323.4 L336.0,323.3 L337.0,323.3 L338.0,324.8 L339.0,323.3 L340.0,324.3 L341.0,323.3 L342.0,323.8 L343.0,324.3 L344.0,323.8 L345.0,324.7 L346.0,323.4 L347.0,324.7 L348.0,324.6 L349.0,324.8 L350.0,322.7 L351.0,324.9 L352.0,322.3 L353.0,323.7 L354.0,322.3 L355.0,320.6 L356.0,319.9 L357.0,318.7 L358.0,319.7 L359.0,322.2 L360.0,323.6 L361.0,323.3 L362.0,323.6 L363.0,324.3 L364.0,325.8 L365.0,326.0 L366.0,324.8 L367.0,324.4 L368.0,325.6 L369.0,328.8 L370.0,328.7 L371.0,330.9 L372.0,333.1 L373.0,333.5 L374.0,332.6 L375.0,334.1 L376.0,333.4 L377.0,333.2 L378.0,333.0 L379.0,333.7 L380.0,333.5 L381.0,328.6 L382.0,324.5 L383.0,321.0 L384.0,317.3 L385.0,319.3 L386.0,316.4 L387.0,315.7 L388.0,313.8 L389.0,318.3 L390.0,319.9 L391.0,322.5 L392.0,322.0 L393.0,323.8 L394.0,322.5 L395.0,322.4 L396.0,325.7 L397.0,323.9 L398.0,324.9 L399.0,323.7 L400.0,324.6 L401.0,324.3 L402.0,326.1 L403.0,326.5 L404.0,325.0 L405.0,325.0 L406.0,325.2 L407.0,324.7 L408.0,324.2 L409.0,323.7 L410.0,324.1 L411.0,324.4 L412.0,324.5 L413.0,322.4 L414.0,320.5 L415.0,321.3 L416.0,321.7 L417.0,320.7 L418.0,319.9 L419.0,317.0 L420.0,320.5 L421.0,319.0 L422.0,318.2 L423.0,317.5 L424.0,320.5 L425.0,325.2 L426.0,332.9 L427.0,333.3 L428.0,331.9 L429.0,333.5 L430.0,333.4 L431.0,333.3 L432.0,333.1 L433.0,332.4 L434.0,333.3 L435.0,333.5 L436.0,333.3 L437.0,334.0 L438.0,334.0 L439.0,324.4 L440.0,316.8 L441.0,316.9 L442.0,315.6 L443.0,323.3 L444.0,329.8 L445.0,330.3 L446.0,331.0 L447.0,330.1 L448.0,330.2 L449.0,328.9 L450.0,328.9 L451.0,329.6 L452.0,329.7 L453.0,330.2 L454.0,331.9 L455.0,330.5 L456.0,330.7 L457.0,332.0 L458.0,332.6 L459.0,333.7 L460.0,335.4 L461.0,336.4 L462.0,337.4 L463.0,339.3 L464.0,340.6 L464.0,348.3 L463.0,350.5 L462.0,351.7 L461.0,352.7 L460.0,353.4 L459.0,355.2 L458.0,355.4 L457.0,357.3 L456.0,357.8 L455.0,358.7 L454.0,359.1 L453.0,359.2 L452.0,357.9 L451.0,358.1 L450.0,359.9 L449.0,360.0 L448.0,358.6 L447.0,359.2 L446.0,357.8 L445.0,358.0 L444.0,358.6 L443.0,366.9 L442.0,372.5 L441.0,375.1 L440.0,374.6 L439.0,365.3 L438.0,355.8 L437.0,356.0 L436.0,355.4 L435.0,355.8 L434.0,356.8 L433.0,355.8 L432.0,356.6 L431.0,356.0 L430.0,356.1 L429.0,355.9 L428.0,355.8 L427.0,356.2 L426.0,356.8 L425.0,364.5 L424.0,370.3 L423.0,370.1 L422.0,369.9 L421.0,369.8 L420.0,371.3 L419.0,370.5 L418.0,372.0 L417.0,371.3 L416.0,370.9 L415.0,368.7 L414.0,366.8 L413.0,365.8 L412.0,366.0 L411.0,365.7 L410.0,365.3 L409.0,363.2 L408.0,363.9 L407.0,364.2 L406.0,365.0 L405.0,362.9 L404.0,364.8 L403.0,363.4 L402.0,364.4 L401.0,363.1 L400.0,362.8 L399.0,364.8 L398.0,365.6 L397.0,363.7 L396.0,365.1 L395.0,366.1 L394.0,365.1 L393.0,365.7 L392.0,366.5 L391.0,367.4 L390.0,368.8 L389.0,373.4 L388.0,375.5 L387.0,374.4 L386.0,370.0 L385.0,371.1 L384.0,370.3 L383.0,371.2 L382.0,364.0 L381.0,360.2 L380.0,355.1 L379.0,355.0 L378.0,355.4 L377.0,355.3 L376.0,356.0 L375.0,356.3 L374.0,356.2 L373.0,356.4 L372.0,355.1 L371.0,357.0 L370.0,359.4 L369.0,360.1 L368.0,363.4 L367.0,364.6 L366.0,364.1 L365.0,365.0 L364.0,365.6 L363.0,365.9 L362.0,365.7 L361.0,365.6 L360.0,367.6 L359.0,369.0 L358.0,367.1 L357.0,369.2 L356.0,368.8 L355.0,368.5 L354.0,367.7 L353.0,367.5 L352.0,365.5 L351.0,364.8 L350.0,365.1 L349.0,365.5 L348.0,364.8 L347.0,363.1 L346.0,364.8 L345.0,363.1 L344.0,364.3 L343.0,364.0 L342.0,364.9 L341.0,362.9 L340.0,365.7 L339.0,364.7 L338.0,364.4 L337.0,364.2 L336.0,365.5 L335.0,364.2 L334.0,365.4 L333.0,364.2 L332.0,364.7 L331.0,364.6 L330.0,364.4 L329.0,363.3 L328.0,363.7 L327.0,362.9 L326.0,362.7 L325.0,362.2 L324.0,360.2 L323.0,355.2 L322.0,352.4 L321.0,351.1 L320.0,351.2 L319.0,350.5 L318.0,350.3 L317.0,351.0 L316.0,351.4 L315.0,352.2 L314.0,352.7 L313.0,353.3 L312.0,354.4 L311.0,353.5 L310.0,353.3 L309.0,353.2 L308.0,352.9 L307.0,353.6 L306.0,353.1 L305.0,353.2 L304.0,352.9 L303.0,353.0 L302.0,353.2 L301.0,353.4 L300.0,353.5 L299.0,352.9 L298.0,353.3 L297.0,352.4 L296.0,352.1 L295.0,351.9 L294.0,351.5 L293.0,350.2 L292.0,349.0 L291.0,347.5 L290.0,346.4Z" fill="#ffffff" fill-opacity="0.28" clip-path="url(#n13)"/>
<clipPath id="n14"><rect x="460" y="409.4" width="83.10000000000002" height="41.60000000000002"/></clipPath>
<path d="M461.0,426.3 L462.0,420.2 L463.0,412.9 L464.0,413.8 L465.0,412.4 L466.0,412.4 L467.0,411.4 L468.0,413.2 L469.0,411.2 L470.0,412.0 L471.0,411.7 L472.0,410.7 L473.0,410.5 L474.0,410.4 L475.0,412.9 L476.0,413.0 L477.0,411.9 L478.0,412.1 L479.0,411.8 L480.0,410.7 L481.0,413.0 L482.0,411.6 L483.0,412.1 L484.0,413.2 L485.0,414.4 L486.0,413.5 L487.0,415.0 L488.0,415.7 L489.0,417.0 L490.0,418.4 L491.0,419.6 L492.0,421.0 L493.0,419.5 L494.0,418.8 L495.0,415.8 L496.0,415.8 L497.0,413.6 L498.0,415.2 L499.0,413.1 L500.0,414.0 L501.0,411.7 L502.0,412.0 L503.0,411.3 L504.0,411.1 L505.0,414.0 L506.0,412.5 L507.0,413.1 L508.0,412.7 L509.0,413.5 L510.0,415.5 L511.0,414.4 L512.0,416.3 L513.0,415.9 L514.0,415.5 L515.0,416.3 L516.0,415.3 L517.0,415.0 L518.0,416.4 L519.0,415.9 L520.0,416.3 L521.0,414.9 L522.0,415.4 L523.0,415.1 L524.0,415.0 L525.0,415.0 L526.0,415.8 L527.0,415.7 L528.0,415.5 L529.0,416.0 L530.0,415.7 L531.0,416.8 L532.0,416.8 L533.0,416.9 L534.0,416.4 L535.0,417.1 L536.0,416.0 L537.0,416.6 L538.0,418.0 L539.0,418.3 L540.0,421.5 L541.0,422.3 L542.0,424.6 L542.0,435.4 L541.0,437.2 L540.0,439.4 L539.0,441.1 L538.0,442.5 L537.0,443.4 L536.0,443.6 L535.0,443.5 L534.0,442.8 L533.0,443.5 L532.0,444.5 L531.0,444.8 L530.0,444.9 L529.0,445.0 L528.0,444.6 L527.0,443.8 L526.0,444.4 L525.0,445.1 L524.0,444.3 L523.0,445.7 L522.0,445.2 L521.0,444.0 L520.0,444.8 L519.0,445.5 L518.0,445.0 L517.0,445.3 L516.0,444.3 L515.0,444.5 L514.0,444.9 L513.0,445.4 L512.0,445.5 L511.0,445.2 L510.0,446.4 L509.0,446.8 L508.0,447.4 L507.0,447.6 L506.0,446.2 L505.0,447.5 L504.0,448.6 L503.0,448.7 L502.0,448.9 L501.0,449.0 L500.0,448.2 L499.0,446.8 L498.0,446.5 L497.0,445.2 L496.0,444.9 L495.0,444.4 L494.0,441.5 L493.0,441.3 L492.0,440.1 L491.0,440.9 L490.0,442.2 L489.0,443.0 L488.0,445.6 L487.0,446.9 L486.0,447.6 L485.0,447.8 L484.0,448.2 L483.0,446.8 L482.0,448.1 L481.0,448.4 L480.0,449.9 L479.0,448.4 L478.0,449.9 L477.0,447.8 L476.0,449.0 L475.0,449.1 L474.0,449.6 L473.0,449.3 L472.0,448.4 L471.0,448.3 L470.0,449.8 L469.0,447.7 L468.0,448.7 L467.0,448.7 L466.0,447.0 L465.0,447.0 L464.0,446.8 L463.0,447.6 L462.0,439.8 L461.0,433.8Z" fill="#76737f"/>
<rect x="460" y="409.4" width="83.10000000000002" height="41.60000000000002" fill="#6a58da"/>
<path d="M461.0,426.3 L462.0,420.2 L463.0,412.9 L464.0,413.8 L465.0,412.4 L466.0,412.4 L467.0,411.4 L468.0,413.2 L469.0,411.2 L470.0,412.0 L471.0,411.7 L472.0,410.7 L473.0,410.5 L474.0,410.4 L475.0,412.9 L476.0,413.0 L477.0,411.9 L478.0,412.1 L479.0,411.8 L480.0,410.7 L481.0,413.0 L482.0,411.6 L483.0,412.1 L484.0,413.2 L485.0,414.4 L486.0,413.5 L487.0,415.0 L488.0,415.7 L489.0,417.0 L490.0,418.4 L491.0,419.6 L492.0,421.0 L493.0,419.5 L494.0,418.8 L495.0,415.8 L496.0,415.8 L497.0,413.6 L498.0,415.2 L499.0,413.1 L500.0,414.0 L501.0,411.7 L502.0,412.0 L503.0,411.3 L504.0,411.1 L505.0,414.0 L506.0,412.5 L507.0,413.1 L508.0,412.7 L509.0,413.5 L510.0,415.5 L511.0,414.4 L512.0,416.3 L513.0,415.9 L514.0,415.5 L515.0,416.3 L516.0,415.3 L517.0,415.0 L518.0,416.4 L519.0,415.9 L520.0,416.3 L521.0,414.9 L522.0,415.4 L523.0,415.1 L524.0,415.0 L525.0,415.0 L526.0,415.8 L527.0,415.7 L528.0,415.5 L529.0,416.0 L530.0,415.7 L531.0,416.8 L532.0,416.8 L533.0,416.9 L534.0,416.4 L535.0,417.1 L536.0,416.0 L537.0,416.6 L538.0,418.0 L539.0,418.3 L540.0,421.5 L541.0,422.3 L542.0,424.6 L542.0,435.4 L541.0,437.2 L540.0,439.4 L539.0,441.1 L538.0,442.5 L537.0,443.4 L536.0,443.6 L535.0,443.5 L534.0,442.8 L533.0,443.5 L532.0,444.5 L531.0,444.8 L530.0,444.9 L529.0,445.0 L528.0,444.6 L527.0,443.8 L526.0,444.4 L525.0,445.1 L524.0,444.3 L523.0,445.7 L522.0,445.2 L521.0,444.0 L520.0,444.8 L519.0,445.5 L518.0,445.0 L517.0,445.3 L516.0,444.3 L515.0,444.5 L514.0,444.9 L513.0,445.4 L512.0,445.5 L511.0,445.2 L510.0,446.4 L509.0,446.8 L508.0,447.4 L507.0,447.6 L506.0,446.2 L505.0,447.5 L504.0,448.6 L503.0,448.7 L502.0,448.9 L501.0,449.0 L500.0,448.2 L499.0,446.8 L498.0,446.5 L497.0,445.2 L496.0,444.9 L495.0,444.4 L494.0,441.5 L493.0,441.3 L492.0,440.1 L491.0,440.9 L490.0,442.2 L489.0,443.0 L488.0,445.6 L487.0,446.9 L486.0,447.6 L485.0,447.8 L484.0,448.2 L483.0,446.8 L482.0,448.1 L481.0,448.4 L480.0,449.9 L479.0,448.4 L478.0,449.9 L477.0,447.8 L476.0,449.0 L475.0,449.1 L474.0,449.6 L473.0,449.3 L472.0,448.4 L471.0,448.3 L470.0,449.8 L469.0,447.7 L468.0,448.7 L467.0,448.7 L466.0,447.0 L465.0,447.0 L464.0,446.8 L463.0,447.6 L462.0,439.8 L461.0,433.8Z" fill="#ffffff" fill-opacity="0.28" clip-path="url(#n14)"/>
<clipPath id="n15"><rect x="552.7" y="328.3" width="135.79999999999995" height="42.099999999999966"/></clipPath>
<path d="M554.0,346.6 L555.0,345.8 L556.0,345.3 L557.0,344.6 L558.0,343.9 L559.0,342.8 L560.0,342.5 L561.0,341.4 L562.0,341.4 L563.0,340.7 L564.0,340.2 L565.0,338.6 L566.0,339.0 L567.0,339.4 L568.0,339.5 L569.0,339.7 L570.0,340.1 L571.0,339.8 L572.0,339.3 L573.0,340.2 L574.0,341.4 L575.0,341.6 L576.0,342.8 L577.0,342.7 L578.0,343.6 L579.0,342.4 L580.0,341.0 L581.0,340.2 L582.0,337.9 L583.0,337.6 L584.0,336.4 L585.0,334.2 L586.0,335.1 L587.0,334.0 L588.0,333.9 L589.0,334.6 L590.0,334.2 L591.0,332.5 L592.0,334.4 L593.0,333.3 L594.0,334.3 L595.0,332.1 L596.0,333.1 L597.0,333.5 L598.0,333.2 L599.0,331.6 L600.0,332.1 L601.0,332.3 L602.0,333.0 L603.0,333.0 L604.0,333.6 L605.0,333.9 L606.0,331.9 L607.0,332.8 L608.0,333.3 L609.0,332.8 L610.0,333.0 L611.0,333.8 L612.0,333.0 L613.0,333.9 L614.0,332.4 L615.0,334.2 L616.0,332.5 L617.0,333.6 L618.0,334.3 L619.0,334.5 L620.0,337.5 L621.0,339.0 L622.0,340.7 L623.0,341.0 L624.0,341.8 L625.0,343.0 L626.0,343.4 L627.0,344.1 L628.0,344.4 L629.0,342.7 L630.0,340.9 L631.0,338.5 L632.0,337.6 L633.0,337.2 L634.0,336.3 L635.0,335.0 L636.0,334.4 L637.0,333.3 L638.0,334.1 L639.0,332.2 L640.0,331.8 L641.0,333.5 L642.0,333.3 L643.0,332.9 L644.0,334.7 L645.0,334.1 L646.0,335.4 L647.0,335.1 L648.0,335.2 L649.0,334.8 L650.0,334.3 L651.0,335.0 L652.0,333.1 L653.0,332.2 L654.0,333.8 L655.0,332.9 L656.0,332.8 L657.0,331.6 L658.0,332.7 L659.0,332.6 L660.0,332.7 L661.0,333.6 L662.0,334.2 L663.0,333.2 L664.0,333.5 L665.0,332.8 L666.0,334.2 L667.0,334.1 L668.0,334.4 L669.0,334.9 L670.0,333.7 L671.0,335.4 L672.0,335.5 L673.0,334.4 L674.0,335.9 L675.0,335.6 L676.0,334.8 L677.0,336.6 L678.0,336.4 L679.0,336.0 L680.0,336.9 L681.0,336.5 L682.0,336.6 L683.0,337.6 L684.0,336.8 L685.0,339.2 L686.0,340.1 L687.0,340.9 L688.0,342.9 L688.0,354.1 L687.0,355.6 L686.0,357.2 L685.0,358.2 L684.0,359.7 L683.0,359.2 L682.0,359.3 L681.0,359.9 L680.0,359.9 L679.0,360.3 L678.0,360.9 L677.0,360.6 L676.0,360.2 L675.0,361.8 L674.0,362.2 L673.0,361.5 L672.0,361.5 L671.0,362.9 L670.0,361.5 L669.0,362.5 L668.0,363.0 L667.0,362.4 L666.0,363.0 L665.0,363.8 L664.0,363.2 L663.0,362.3 L662.0,363.6 L661.0,364.3 L660.0,363.3 L659.0,363.0 L658.0,363.2 L657.0,364.0 L656.0,364.1 L655.0,362.9 L654.0,364.5 L653.0,363.7 L652.0,361.9 L651.0,361.5 L650.0,362.3 L649.0,361.5 L648.0,361.4 L647.0,361.7 L646.0,362.3 L645.0,362.5 L644.0,363.7 L643.0,363.8 L642.0,362.5 L641.0,363.2 L640.0,363.7 L639.0,363.2 L638.0,362.3 L637.0,361.5 L636.0,360.8 L635.0,361.9 L634.0,360.8 L633.0,359.2 L632.0,359.7 L631.0,357.3 L630.0,355.8 L629.0,354.2 L628.0,352.0 L627.0,352.7 L626.0,353.2 L625.0,353.7 L624.0,354.4 L623.0,354.8 L622.0,355.4 L621.0,357.0 L620.0,359.4 L619.0,361.6 L618.0,364.0 L617.0,363.6 L616.0,362.4 L615.0,362.7 L614.0,363.9 L613.0,363.5 L612.0,362.9 L611.0,363.6 L610.0,362.3 L609.0,362.2 L608.0,364.2 L607.0,363.7 L606.0,363.2 L605.0,362.7 L604.0,363.0 L603.0,364.3 L602.0,363.4 L601.0,364.4 L600.0,363.8 L599.0,365.2 L598.0,364.5 L597.0,363.5 L596.0,363.7 L595.0,362.7 L594.0,364.5 L593.0,363.3 L592.0,363.9 L591.0,362.2 L590.0,363.4 L589.0,361.8 L588.0,362.9 L587.0,363.3 L586.0,361.8 L585.0,363.1 L584.0,361.2 L583.0,359.9 L582.0,358.5 L581.0,357.1 L580.0,356.0 L579.0,354.4 L578.0,352.7 L577.0,353.9 L576.0,354.5 L575.0,354.8 L574.0,355.2 L573.0,355.5 L572.0,357.1 L571.0,356.2 L570.0,356.3 L569.0,357.2 L568.0,356.6 L567.0,357.5 L566.0,358.0 L565.0,357.7 L564.0,356.9 L563.0,356.6 L562.0,355.2 L561.0,355.2 L560.0,354.5 L559.0,353.7 L558.0,352.6 L557.0,352.1 L556.0,351.8 L555.0,351.0 L554.0,350.3Z" fill="#76737f"/>
<rect x="552.7" y="328.3" width="135.79999999999995" height="42.099999999999966" fill="#6a58da"/>
<path d="M554.0,346.6 L555.0,345.8 L556.0,345.3 L557.0,344.6 L558.0,343.9 L559.0,342.8 L560.0,342.5 L561.0,341.4 L562.0,341.4 L563.0,340.7 L564.0,340.2 L565.0,338.6 L566.0,339.0 L567.0,339.4 L568.0,339.5 L569.0,339.7 L570.0,340.1 L571.0,339.8 L572.0,339.3 L573.0,340.2 L574.0,341.4 L575.0,341.6 L576.0,342.8 L577.0,342.7 L578.0,343.6 L579.0,342.4 L580.0,341.0 L581.0,340.2 L582.0,337.9 L583.0,337.6 L584.0,336.4 L585.0,334.2 L586.0,335.1 L587.0,334.0 L588.0,333.9 L589.0,334.6 L590.0,334.2 L591.0,332.5 L592.0,334.4 L593.0,333.3 L594.0,334.3 L595.0,332.1 L596.0,333.1 L597.0,333.5 L598.0,333.2 L599.0,331.6 L600.0,332.1 L601.0,332.3 L602.0,333.0 L603.0,333.0 L604.0,333.6 L605.0,333.9 L606.0,331.9 L607.0,332.8 L608.0,333.3 L609.0,332.8 L610.0,333.0 L611.0,333.8 L612.0,333.0 L613.0,333.9 L614.0,332.4 L615.0,334.2 L616.0,332.5 L617.0,333.6 L618.0,334.3 L619.0,334.5 L620.0,337.5 L621.0,339.0 L622.0,340.7 L623.0,341.0 L624.0,341.8 L625.0,343.0 L626.0,343.4 L627.0,344.1 L628.0,344.4 L629.0,342.7 L630.0,340.9 L631.0,338.5 L632.0,337.6 L633.0,337.2 L634.0,336.3 L635.0,335.0 L636.0,334.4 L637.0,333.3 L638.0,334.1 L639.0,332.2 L640.0,331.8 L641.0,333.5 L642.0,333.3 L643.0,332.9 L644.0,334.7 L645.0,334.1 L646.0,335.4 L647.0,335.1 L648.0,335.2 L649.0,334.8 L650.0,334.3 L651.0,335.0 L652.0,333.1 L653.0,332.2 L654.0,333.8 L655.0,332.9 L656.0,332.8 L657.0,331.6 L658.0,332.7 L659.0,332.6 L660.0,332.7 L661.0,333.6 L662.0,334.2 L663.0,333.2 L664.0,333.5 L665.0,332.8 L666.0,334.2 L667.0,334.1 L668.0,334.4 L669.0,334.9 L670.0,333.7 L671.0,335.4 L672.0,335.5 L673.0,334.4 L674.0,335.9 L675.0,335.6 L676.0,334.8 L677.0,336.6 L678.0,336.4 L679.0,336.0 L680.0,336.9 L681.0,336.5 L682.0,336.6 L683.0,337.6 L684.0,336.8 L685.0,339.2 L686.0,340.1 L687.0,340.9 L688.0,342.9 L688.0,354.1 L687.0,355.6 L686.0,357.2 L685.0,358.2 L684.0,359.7 L683.0,359.2 L682.0,359.3 L681.0,359.9 L680.0,359.9 L679.0,360.3 L678.0,360.9 L677.0,360.6 L676.0,360.2 L675.0,361.8 L674.0,362.2 L673.0,361.5 L672.0,361.5 L671.0,362.9 L670.0,361.5 L669.0,362.5 L668.0,363.0 L667.0,362.4 L666.0,363.0 L665.0,363.8 L664.0,363.2 L663.0,362.3 L662.0,363.6 L661.0,364.3 L660.0,363.3 L659.0,363.0 L658.0,363.2 L657.0,364.0 L656.0,364.1 L655.0,362.9 L654.0,364.5 L653.0,363.7 L652.0,361.9 L651.0,361.5 L650.0,362.3 L649.0,361.5 L648.0,361.4 L647.0,361.7 L646.0,362.3 L645.0,362.5 L644.0,363.7 L643.0,363.8 L642.0,362.5 L641.0,363.2 L640.0,363.7 L639.0,363.2 L638.0,362.3 L637.0,361.5 L636.0,360.8 L635.0,361.9 L634.0,360.8 L633.0,359.2 L632.0,359.7 L631.0,357.3 L630.0,355.8 L629.0,354.2 L628.0,352.0 L627.0,352.7 L626.0,353.2 L625.0,353.7 L624.0,354.4 L623.0,354.8 L622.0,355.4 L621.0,357.0 L620.0,359.4 L619.0,361.6 L618.0,364.0 L617.0,363.6 L616.0,362.4 L615.0,362.7 L614.0,363.9 L613.0,363.5 L612.0,362.9 L611.0,363.6 L610.0,362.3 L609.0,362.2 L608.0,364.2 L607.0,363.7 L606.0,363.2 L605.0,362.7 L604.0,363.0 L603.0,364.3 L602.0,363.4 L601.0,364.4 L600.0,363.8 L599.0,365.2 L598.0,364.5 L597.0,363.5 L596.0,363.7 L595.0,362.7 L594.0,364.5 L593.0,363.3 L592.0,363.9 L591.0,362.2 L590.0,363.4 L589.0,361.8 L588.0,362.9 L587.0,363.3 L586.0,361.8 L585.0,363.1 L584.0,361.2 L583.0,359.9 L582.0,358.5 L581.0,357.1 L580.0,356.0 L579.0,354.4 L578.0,352.7 L577.0,353.9 L576.0,354.5 L575.0,354.8 L574.0,355.2 L573.0,355.5 L572.0,357.1 L571.0,356.2 L570.0,356.3 L569.0,357.2 L568.0,356.6 L567.0,357.5 L566.0,358.0 L565.0,357.7 L564.0,356.9 L563.0,356.6 L562.0,355.2 L561.0,355.2 L560.0,354.5 L559.0,353.7 L558.0,352.6 L557.0,352.1 L556.0,351.8 L555.0,351.0 L554.0,350.3Z" fill="#ffffff" fill-opacity="0.28" clip-path="url(#n15)"/>
<clipPath id="n16"><rect x="703.7" y="191.4" width="174.39999999999998" height="42.0"/></clipPath>
<path d="M704.0,212.2 L705.0,212.3 L706.0,212.3 L707.0,212.3 L708.0,212.2 L709.0,212.2 L710.0,212.2 L711.0,212.3 L712.0,212.3 L713.0,212.2 L714.0,212.3 L715.0,212.1 L716.0,212.2 L717.0,212.2 L718.0,212.2 L719.0,212.2 L720.0,212.2 L721.0,212.1 L722.0,212.3 L723.0,212.2 L724.0,212.1 L725.0,212.1 L726.0,212.1 L727.0,212.2 L728.0,212.2 L729.0,212.2 L730.0,212.2 L731.0,212.1 L732.0,212.0 L733.0,212.1 L734.0,212.1 L735.0,212.1 L736.0,212.1 L737.0,212.2 L738.0,212.1 L739.0,212.0 L740.0,212.0 L741.0,212.0 L742.0,212.1 L743.0,212.1 L744.0,212.1 L745.0,212.1 L746.0,212.0 L747.0,212.0 L748.0,211.9 L749.0,212.0 L750.0,212.0 L751.0,212.0 L752.0,211.9 L753.0,211.6 L754.0,211.1 L755.0,210.5 L756.0,204.0 L757.0,198.4 L758.0,192.5 L759.0,189.5 L760.0,182.5 L761.0,181.1 L762.0,182.1 L763.0,183.4 L764.0,187.8 L765.0,193.5 L766.0,200.5 L767.0,203.2 L768.0,205.0 L769.0,205.0 L770.0,204.5 L771.0,205.2 L772.0,204.8 L773.0,205.4 L774.0,204.5 L775.0,204.6 L776.0,204.9 L777.0,204.7 L778.0,205.3 L779.0,204.5 L780.0,204.9 L781.0,205.2 L782.0,204.7 L783.0,205.0 L784.0,203.9 L785.0,204.6 L786.0,196.2 L787.0,196.3 L788.0,195.6 L789.0,196.3 L790.0,194.7 L791.0,195.0 L792.0,196.0 L793.0,194.2 L794.0,196.4 L795.0,196.5 L796.0,196.3 L797.0,194.1 L798.0,195.6 L799.0,196.1 L800.0,194.0 L801.0,194.0 L802.0,193.8 L803.0,194.1 L804.0,195.9 L805.0,195.0 L806.0,194.3 L807.0,195.2 L808.0,195.2 L809.0,196.3 L810.0,194.4 L811.0,199.1 L812.0,204.0 L813.0,202.4 L814.0,200.8 L815.0,197.5 L816.0,196.3 L817.0,194.6 L818.0,191.9 L819.0,192.3 L820.0,195.3 L821.0,196.2 L822.0,197.0 L823.0,198.0 L824.0,198.5 L825.0,200.6 L826.0,201.6 L827.0,202.9 L828.0,202.3 L829.0,201.9 L830.0,202.4 L831.0,201.6 L832.0,201.9 L833.0,202.1 L834.0,202.6 L835.0,202.4 L836.0,201.9 L837.0,202.1 L838.0,201.5 L839.0,202.9 L840.0,201.9 L841.0,203.0 L842.0,201.4 L843.0,202.9 L844.0,203.0 L845.0,202.8 L846.0,192.6 L847.0,188.9 L848.0,188.7 L849.0,191.3 L850.0,190.8 L851.0,190.9 L852.0,191.8 L853.0,192.6 L854.0,191.6 L855.0,192.7 L856.0,195.2 L857.0,195.3 L858.0,196.5 L859.0,196.5 L860.0,196.9 L861.0,197.4 L862.0,198.0 L863.0,197.0 L864.0,197.7 L865.0,197.5 L866.0,198.5 L867.0,199.0 L868.0,198.4 L869.0,199.0 L870.0,200.4 L871.0,200.0 L872.0,200.8 L873.0,200.4 L874.0,199.9 L875.0,201.4 L876.0,200.5 L877.0,201.6 L878.0,201.0 L878.0,225.6 L877.0,225.9 L876.0,225.4 L875.0,225.4 L874.0,225.6 L873.0,227.5 L872.0,226.4 L871.0,226.6 L870.0,228.1 L869.0,226.6 L868.0,228.5 L867.0,228.5 L866.0,227.3 L865.0,228.6 L864.0,228.7 L863.0,229.6 L862.0,229.1 L861.0,229.8 L860.0,228.4 L859.0,230.2 L858.0,230.2 L857.0,230.2 L856.0,233.3 L855.0,234.5 L854.0,235.7 L853.0,234.5 L852.0,234.5 L851.0,236.0 L850.0,237.9 L849.0,235.4 L848.0,236.9 L847.0,237.2 L846.0,235.8 L845.0,225.0 L844.0,224.6 L843.0,224.7 L842.0,225.2 L841.0,224.1 L840.0,224.3 L839.0,225.0 L838.0,224.0 L837.0,224.2 L836.0,223.8 L835.0,224.9 L834.0,223.8 L833.0,225.3 L832.0,224.4 L831.0,224.7 L830.0,224.9 L829.0,224.4 L828.0,223.8 L827.0,224.5 L826.0,226.7 L825.0,227.3 L824.0,228.2 L823.0,230.5 L822.0,232.0 L821.0,232.8 L820.0,232.6 L819.0,233.5 L818.0,235.2 L817.0,230.7 L816.0,229.8 L815.0,227.2 L814.0,226.3 L813.0,224.7 L812.0,222.3 L811.0,226.0 L810.0,231.9 L809.0,231.5 L808.0,232.1 L807.0,232.4 L806.0,230.5 L805.0,230.8 L804.0,230.9 L803.0,231.2 L802.0,233.1 L801.0,233.0 L800.0,232.2 L799.0,232.7 L798.0,232.9 L797.0,231.5 L796.0,232.7 L795.0,230.8 L794.0,231.0 L793.0,232.8 L792.0,230.4 L791.0,230.8 L790.0,231.1 L789.0,231.2 L788.0,230.9 L787.0,230.0 L786.0,230.7 L785.0,222.2 L784.0,222.6 L783.0,222.2 L782.0,222.8 L781.0,222.8 L780.0,222.6 L779.0,222.0 L778.0,221.6 L777.0,221.8 L776.0,221.9 L775.0,221.5 L774.0,222.0 L773.0,221.5 L772.0,221.8 L771.0,221.5 L770.0,221.6 L769.0,221.8 L768.0,221.7 L767.0,223.6 L766.0,227.8 L765.0,233.4 L764.0,239.0 L763.0,245.2 L762.0,248.0 L761.0,244.9 L760.0,244.5 L759.0,239.0 L758.0,232.3 L757.0,227.5 L756.0,222.7 L755.0,216.2 L754.0,215.9 L753.0,215.1 L752.0,214.9 L751.0,214.9 L750.0,214.7 L749.0,214.9 L748.0,214.8 L747.0,214.7 L746.0,214.9 L745.0,214.8 L744.0,214.8 L743.0,214.7 L742.0,214.8 L741.0,214.7 L740.0,214.8 L739.0,214.8 L738.0,214.7 L737.0,214.7 L736.0,214.7 L735.0,214.7 L734.0,214.7 L733.0,214.7 L732.0,214.7 L731.0,214.7 L730.0,214.7 L729.0,214.7 L728.0,214.7 L727.0,214.7 L726.0,214.6 L725.0,214.6 L724.0,214.7 L723.0,214.6 L722.0,214.6 L721.0,214.7 L720.0,214.5 L719.0,214.6 L718.0,214.5 L717.0,214.6 L716.0,214.6 L715.0,214.6 L714.0,214.5 L713.0,214.5 L712.0,214.5 L711.0,214.6 L710.0,214.6 L709.0,214.6 L708.0,214.5 L707.0,214.5 L706.0,214.5 L705.0,214.5 L704.0,214.6Z" fill="#76737f"/>
<rect x="703.7" y="191.4" width="174.39999999999998" height="42.0" fill="#6a58da"/>
<rect x="703.7" y="191.4" width="49.69999999999993" height="42.0" fill="#2a7a58"/>
<path d="M704.0,212.2 L705.0,212.3 L706.0,212.3 L707.0,212.3 L708.0,212.2 L709.0,212.2 L710.0,212.2 L711.0,212.3 L712.0,212.3 L713.0,212.2 L714.0,212.3 L715.0,212.1 L716.0,212.2 L717.0,212.2 L718.0,212.2 L719.0,212.2 L720.0,212.2 L721.0,212.1 L722.0,212.3 L723.0,212.2 L724.0,212.1 L725.0,212.1 L726.0,212.1 L727.0,212.2 L728.0,212.2 L729.0,212.2 L730.0,212.2 L731.0,212.1 L732.0,212.0 L733.0,212.1 L734.0,212.1 L735.0,212.1 L736.0,212.1 L737.0,212.2 L738.0,212.1 L739.0,212.0 L740.0,212.0 L741.0,212.0 L742.0,212.1 L743.0,212.1 L744.0,212.1 L745.0,212.1 L746.0,212.0 L747.0,212.0 L748.0,211.9 L749.0,212.0 L750.0,212.0 L751.0,212.0 L752.0,211.9 L753.0,211.6 L754.0,211.1 L755.0,210.5 L756.0,204.0 L757.0,198.4 L758.0,192.5 L759.0,189.5 L760.0,182.5 L761.0,181.1 L762.0,182.1 L763.0,183.4 L764.0,187.8 L765.0,193.5 L766.0,200.5 L767.0,203.2 L768.0,205.0 L769.0,205.0 L770.0,204.5 L771.0,205.2 L772.0,204.8 L773.0,205.4 L774.0,204.5 L775.0,204.6 L776.0,204.9 L777.0,204.7 L778.0,205.3 L779.0,204.5 L780.0,204.9 L781.0,205.2 L782.0,204.7 L783.0,205.0 L784.0,203.9 L785.0,204.6 L786.0,196.2 L787.0,196.3 L788.0,195.6 L789.0,196.3 L790.0,194.7 L791.0,195.0 L792.0,196.0 L793.0,194.2 L794.0,196.4 L795.0,196.5 L796.0,196.3 L797.0,194.1 L798.0,195.6 L799.0,196.1 L800.0,194.0 L801.0,194.0 L802.0,193.8 L803.0,194.1 L804.0,195.9 L805.0,195.0 L806.0,194.3 L807.0,195.2 L808.0,195.2 L809.0,196.3 L810.0,194.4 L811.0,199.1 L812.0,204.0 L813.0,202.4 L814.0,200.8 L815.0,197.5 L816.0,196.3 L817.0,194.6 L818.0,191.9 L819.0,192.3 L820.0,195.3 L821.0,196.2 L822.0,197.0 L823.0,198.0 L824.0,198.5 L825.0,200.6 L826.0,201.6 L827.0,202.9 L828.0,202.3 L829.0,201.9 L830.0,202.4 L831.0,201.6 L832.0,201.9 L833.0,202.1 L834.0,202.6 L835.0,202.4 L836.0,201.9 L837.0,202.1 L838.0,201.5 L839.0,202.9 L840.0,201.9 L841.0,203.0 L842.0,201.4 L843.0,202.9 L844.0,203.0 L845.0,202.8 L846.0,192.6 L847.0,188.9 L848.0,188.7 L849.0,191.3 L850.0,190.8 L851.0,190.9 L852.0,191.8 L853.0,192.6 L854.0,191.6 L855.0,192.7 L856.0,195.2 L857.0,195.3 L858.0,196.5 L859.0,196.5 L860.0,196.9 L861.0,197.4 L862.0,198.0 L863.0,197.0 L864.0,197.7 L865.0,197.5 L866.0,198.5 L867.0,199.0 L868.0,198.4 L869.0,199.0 L870.0,200.4 L871.0,200.0 L872.0,200.8 L873.0,200.4 L874.0,199.9 L875.0,201.4 L876.0,200.5 L877.0,201.6 L878.0,201.0 L878.0,225.6 L877.0,225.9 L876.0,225.4 L875.0,225.4 L874.0,225.6 L873.0,227.5 L872.0,226.4 L871.0,226.6 L870.0,228.1 L869.0,226.6 L868.0,228.5 L867.0,228.5 L866.0,227.3 L865.0,228.6 L864.0,228.7 L863.0,229.6 L862.0,229.1 L861.0,229.8 L860.0,228.4 L859.0,230.2 L858.0,230.2 L857.0,230.2 L856.0,233.3 L855.0,234.5 L854.0,235.7 L853.0,234.5 L852.0,234.5 L851.0,236.0 L850.0,237.9 L849.0,235.4 L848.0,236.9 L847.0,237.2 L846.0,235.8 L845.0,225.0 L844.0,224.6 L843.0,224.7 L842.0,225.2 L841.0,224.1 L840.0,224.3 L839.0,225.0 L838.0,224.0 L837.0,224.2 L836.0,223.8 L835.0,224.9 L834.0,223.8 L833.0,225.3 L832.0,224.4 L831.0,224.7 L830.0,224.9 L829.0,224.4 L828.0,223.8 L827.0,224.5 L826.0,226.7 L825.0,227.3 L824.0,228.2 L823.0,230.5 L822.0,232.0 L821.0,232.8 L820.0,232.6 L819.0,233.5 L818.0,235.2 L817.0,230.7 L816.0,229.8 L815.0,227.2 L814.0,226.3 L813.0,224.7 L812.0,222.3 L811.0,226.0 L810.0,231.9 L809.0,231.5 L808.0,232.1 L807.0,232.4 L806.0,230.5 L805.0,230.8 L804.0,230.9 L803.0,231.2 L802.0,233.1 L801.0,233.0 L800.0,232.2 L799.0,232.7 L798.0,232.9 L797.0,231.5 L796.0,232.7 L795.0,230.8 L794.0,231.0 L793.0,232.8 L792.0,230.4 L791.0,230.8 L790.0,231.1 L789.0,231.2 L788.0,230.9 L787.0,230.0 L786.0,230.7 L785.0,222.2 L784.0,222.6 L783.0,222.2 L782.0,222.8 L781.0,222.8 L780.0,222.6 L779.0,222.0 L778.0,221.6 L777.0,221.8 L776.0,221.9 L775.0,221.5 L774.0,222.0 L773.0,221.5 L772.0,221.8 L771.0,221.5 L770.0,221.6 L769.0,221.8 L768.0,221.7 L767.0,223.6 L766.0,227.8 L765.0,233.4 L764.0,239.0 L763.0,245.2 L762.0,248.0 L761.0,244.9 L760.0,244.5 L759.0,239.0 L758.0,232.3 L757.0,227.5 L756.0,222.7 L755.0,216.2 L754.0,215.9 L753.0,215.1 L752.0,214.9 L751.0,214.9 L750.0,214.7 L749.0,214.9 L748.0,214.8 L747.0,214.7 L746.0,214.9 L745.0,214.8 L744.0,214.8 L743.0,214.7 L742.0,214.8 L741.0,214.7 L740.0,214.8 L739.0,214.8 L738.0,214.7 L737.0,214.7 L736.0,214.7 L735.0,214.7 L734.0,214.7 L733.0,214.7 L732.0,214.7 L731.0,214.7 L730.0,214.7 L729.0,214.7 L728.0,214.7 L727.0,214.7 L726.0,214.6 L725.0,214.6 L724.0,214.7 L723.0,214.6 L722.0,214.6 L721.0,214.7 L720.0,214.5 L719.0,214.6 L718.0,214.5 L717.0,214.6 L716.0,214.6 L715.0,214.6 L714.0,214.5 L713.0,214.5 L712.0,214.5 L711.0,214.6 L710.0,214.6 L709.0,214.6 L708.0,214.5 L707.0,214.5 L706.0,214.5 L705.0,214.5 L704.0,214.6Z" fill="#ffffff" fill-opacity="0.28" clip-path="url(#n16)"/>
<clipPath id="n17"><rect x="878.1" y="428.4" width="72.60000000000002" height="42.10000000000002"/></clipPath>
<path d="M879.0,436.2 L880.0,436.9 L881.0,436.1 L882.0,435.6 L883.0,433.7 L884.0,435.2 L885.0,434.3 L886.0,435.8 L887.0,435.4 L888.0,435.4 L889.0,437.8 L890.0,438.2 L891.0,439.3 L892.0,439.2 L893.0,440.1 L894.0,438.3 L895.0,438.2 L896.0,436.7 L897.0,437.3 L898.0,434.8 L899.0,434.0 L900.0,433.9 L901.0,429.8 L902.0,427.5 L903.0,422.2 L904.0,418.0 L905.0,412.5 L906.0,410.1 L907.0,410.4 L908.0,405.8 L909.0,412.6 L910.0,411.0 L911.0,414.2 L912.0,413.1 L913.0,420.1 L914.0,425.0 L915.0,431.7 L916.0,435.2 L917.0,437.9 L918.0,438.1 L919.0,438.7 L920.0,440.6 L921.0,440.6 L922.0,441.4 L923.0,441.6 L924.0,443.1 L925.0,443.5 L926.0,443.9 L927.0,444.7 L928.0,445.2 L929.0,445.8 L930.0,446.1 L931.0,442.5 L932.0,438.4 L933.0,433.4 L934.0,435.7 L935.0,435.9 L936.0,437.2 L937.0,439.3 L938.0,442.1 L939.0,443.8 L940.0,446.3 L941.0,446.8 L942.0,446.9 L943.0,447.1 L944.0,447.7 L945.0,447.8 L946.0,448.2 L947.0,448.2 L948.0,448.6 L949.0,448.9 L950.0,449.2 L950.0,452.8 L949.0,453.2 L948.0,453.4 L947.0,453.8 L946.0,453.9 L945.0,454.3 L944.0,454.5 L943.0,454.8 L942.0,454.8 L941.0,455.3 L940.0,456.0 L939.0,458.3 L938.0,460.7 L937.0,461.8 L936.0,464.9 L935.0,465.9 L934.0,466.8 L933.0,468.3 L932.0,464.2 L931.0,460.0 L930.0,455.9 L929.0,456.4 L928.0,456.7 L927.0,458.2 L926.0,458.9 L925.0,458.4 L924.0,459.3 L923.0,460.2 L922.0,460.8 L921.0,461.7 L920.0,462.0 L919.0,462.7 L918.0,463.7 L917.0,466.0 L916.0,464.8 L915.0,471.6 L914.0,475.6 L913.0,481.4 L912.0,485.0 L911.0,489.5 L910.0,487.7 L909.0,493.0 L908.0,492.8 L907.0,491.6 L906.0,489.4 L905.0,486.6 L904.0,484.8 L903.0,478.0 L902.0,476.9 L901.0,471.0 L900.0,466.6 L899.0,466.3 L898.0,466.4 L897.0,464.4 L896.0,463.9 L895.0,462.8 L894.0,462.2 L893.0,462.5 L892.0,462.2 L891.0,464.1 L890.0,464.1 L889.0,465.7 L888.0,465.0 L887.0,465.2 L886.0,466.0 L885.0,468.2 L884.0,468.0 L883.0,467.4 L882.0,467.7 L881.0,466.0 L880.0,466.7 L879.0,465.2Z" fill="#76737f"/>
<rect x="878.1" y="428.4" width="53.10000000000002" height="42.10000000000002" fill="#6a58da"/>
<rect x="932.1" y="428.4" width="18.600000000000023" height="42.10000000000002" fill="#2a7a58"/>
<path d="M879.0,436.2 L880.0,436.9 L881.0,436.1 L882.0,435.6 L883.0,433.7 L884.0,435.2 L885.0,434.3 L886.0,435.8 L887.0,435.4 L888.0,435.4 L889.0,437.8 L890.0,438.2 L891.0,439.3 L892.0,439.2 L893.0,440.1 L894.0,438.3 L895.0,438.2 L896.0,436.7 L897.0,437.3 L898.0,434.8 L899.0,434.0 L900.0,433.9 L901.0,429.8 L902.0,427.5 L903.0,422.2 L904.0,418.0 L905.0,412.5 L906.0,410.1 L907.0,410.4 L908.0,405.8 L909.0,412.6 L910.0,411.0 L911.0,414.2 L912.0,413.1 L913.0,420.1 L914.0,425.0 L915.0,431.7 L916.0,435.2 L917.0,437.9 L918.0,438.1 L919.0,438.7 L920.0,440.6 L921.0,440.6 L922.0,441.4 L923.0,441.6 L924.0,443.1 L925.0,443.5 L926.0,443.9 L927.0,444.7 L928.0,445.2 L929.0,445.8 L930.0,446.1 L931.0,442.5 L932.0,438.4 L933.0,433.4 L934.0,435.7 L935.0,435.9 L936.0,437.2 L937.0,439.3 L938.0,442.1 L939.0,443.8 L940.0,446.3 L941.0,446.8 L942.0,446.9 L943.0,447.1 L944.0,447.7 L945.0,447.8 L946.0,448.2 L947.0,448.2 L948.0,448.6 L949.0,448.9 L950.0,449.2 L950.0,452.8 L949.0,453.2 L948.0,453.4 L947.0,453.8 L946.0,453.9 L945.0,454.3 L944.0,454.5 L943.0,454.8 L942.0,454.8 L941.0,455.3 L940.0,456.0 L939.0,458.3 L938.0,460.7 L937.0,461.8 L936.0,464.9 L935.0,465.9 L934.0,466.8 L933.0,468.3 L932.0,464.2 L931.0,460.0 L930.0,455.9 L929.0,456.4 L928.0,456.7 L927.0,458.2 L926.0,458.9 L925.0,458.4 L924.0,459.3 L923.0,460.2 L922.0,460.8 L921.0,461.7 L920.0,462.0 L919.0,462.7 L918.0,463.7 L917.0,466.0 L916.0,464.8 L915.0,471.6 L914.0,475.6 L913.0,481.4 L912.0,485.0 L911.0,489.5 L910.0,487.7 L909.0,493.0 L908.0,492.8 L907.0,491.6 L906.0,489.4 L905.0,486.6 L904.0,484.8 L903.0,478.0 L902.0,476.9 L901.0,471.0 L900.0,466.6 L899.0,466.3 L898.0,466.4 L897.0,464.4 L896.0,463.9 L895.0,462.8 L894.0,462.2 L893.0,462.5 L892.0,462.2 L891.0,464.1 L890.0,464.1 L889.0,465.7 L888.0,465.0 L887.0,465.2 L886.0,466.0 L885.0,468.2 L884.0,468.0 L883.0,467.4 L882.0,467.7 L881.0,466.0 L880.0,466.7 L879.0,465.2Z" fill="#ffffff" fill-opacity="0.28" clip-path="url(#n17)"/>
<path d="M704,213.4 L748,213 L751,211.5 L753,213.4 L751,215.3 L748,213.8 Z" fill="#6fc29c" fill-opacity="0.55"/>
<path d="M92,602 C92.3,601.8 93.0,599.8 94,600.5 C95.0,601.2 96.7,604.8 98,606 C99.3,607.2 100.7,606.7 102,608 C103.3,609.3 104.9,612.3 106,614 C107.1,615.7 107.8,619.5 108.5,618 C109.2,616.5 109.8,608.3 110.5,605 C111.2,601.7 111.4,599.0 113,598 C114.6,597.0 117.2,598.5 120,599 C122.8,599.5 127.2,600.8 130,601 C132.8,601.2 135.4,601.3 137,600.5 C138.6,599.7 138.8,599.1 139.5,596 C140.2,592.9 140.5,587.7 141,582 C141.5,576.3 141.3,571.5 142.5,562 C143.7,552.5 146.3,537.0 148,525 C149.7,513.0 151.8,500.7 152.5,490 C153.2,479.3 153.1,469.0 152,461 C150.9,453.0 147.5,448.2 146,442 C144.5,435.8 143.0,430.2 143,424 C143.0,417.8 144.8,411.3 146,405 C147.2,398.7 148.4,392.8 150,386 C151.6,379.2 153.8,369.9 155.6,364 C157.4,358.1 159.1,353.1 161,350.5 C162.9,347.9 165.4,347.9 167,348.7 C168.6,349.4 169.3,353.8 170.5,355 C171.7,356.2 172.1,359.5 174,356 C175.9,352.5 178.9,339.8 182,334 C185.1,328.2 190.0,321.0 192.5,321 C195.0,321.0 194.8,329.4 197,334 C199.2,338.6 202.7,341.9 206,348.7 C209.3,355.5 213.8,366.9 217,375 C220.2,383.1 223.0,388.6 225,397 C227.0,405.4 227.9,425.5 229,425.5 C230.1,425.5 230.8,407.9 231.6,397 C232.4,386.1 232.6,368.7 234,360 C235.4,351.3 238.3,348.5 240,345 C241.7,341.5 243.3,340.0 244,339" fill="none" stroke="#e4e0f4" stroke-width="1.35" stroke-linejoin="round" stroke-linecap="round"/>
<path d="M288.5,320.6 C292.8,324.2 305.4,337.4 314,342 C322.6,346.6 334.7,346.3 340,348 C345.3,349.7 344.0,350.3 346,352 C348.0,353.7 350.3,356.6 352,358 C353.7,359.4 354.0,361.0 356,360.5 C358.0,360.0 361.8,357.6 364,355 C366.2,352.4 367.2,346.8 369,345 C370.8,343.2 371.5,343.7 375,344 C378.5,344.3 385.0,346.5 390,347 C395.0,347.5 400.0,348.3 405,347 C410.0,345.7 416.7,340.2 420,339 C423.3,337.8 423.0,337.7 425,339.5 C427.0,341.3 430.2,347.1 432,350 C433.8,352.9 434.7,357.0 436,357 C437.3,357.0 438.0,353.5 440,350 C442.0,346.5 446.0,337.5 448,336 C450.0,334.5 450.3,339.3 452,341 C453.7,342.7 456.0,345.3 458,346 C460.0,346.7 463.0,345.2 464,345" fill="none" stroke="#e4e0f4" stroke-width="1.35" stroke-linejoin="round" stroke-linecap="round"/>
<path d="M506.3,409 C507.8,411.7 511.4,420.5 515,425 C518.6,429.5 525.0,433.0 528,436 C531.0,439.0 531.5,441.3 533,443 C534.5,444.7 535.0,446.0 537,446 C539.0,446.0 542.8,444.2 545,443 C547.2,441.8 549.0,446.2 550,439 C551.0,431.8 550.6,413.2 551,400 C551.4,386.8 551.8,369.2 552.5,360 C553.2,350.8 553.6,349.0 555,345 C556.4,341.0 558.2,336.0 561,336 C563.8,336.0 567.2,341.3 572,345 C576.8,348.7 585.3,355.3 590,358 C594.7,360.7 596.3,362.3 600,361 C603.7,359.7 609.2,352.8 612,350 C614.8,347.2 614.8,343.7 617,344 C619.2,344.3 621.2,348.0 625,352 C628.8,356.0 636.2,364.8 640,368 C643.8,371.2 644.7,371.8 648,371 C651.3,370.2 656.3,366.7 660,363 C663.7,359.3 666.7,351.0 670,349 C673.3,347.0 677.2,350.2 680,351 C682.8,351.8 685.8,353.5 687,354" fill="none" stroke="#e4e0f4" stroke-width="1.35" stroke-linejoin="round" stroke-linecap="round"/>
<path d="M754,196.6 C756.7,198.7 764.0,205.1 770,209 C776.0,212.9 783.3,217.6 790,220 C796.7,222.4 805.7,223.2 810,223.5 C814.3,223.8 813.5,224.2 816,222 C818.5,219.8 821.8,213.2 825,210 C828.2,206.8 831.7,203.8 835,203 C838.3,202.2 842.0,204.2 845,205 C848.0,205.8 850.2,208.3 853,208 C855.8,207.7 858.8,204.1 862,203 C865.2,201.9 869.3,201.3 872,201.5 C874.7,201.7 877.0,203.6 878,204" fill="none" stroke="#e4e0f4" stroke-width="1.35" stroke-linejoin="round" stroke-linecap="round"/>
<path d="M878,460 C878.7,460.7 880.0,463.5 882,464 C884.0,464.5 887.0,463.7 890,463 C893.0,462.3 895.8,461.5 900,460 C904.2,458.5 911.7,455.5 915,454 C918.3,452.5 918.5,452.7 920,451 C921.5,449.3 923.0,446.2 924,444 C925.0,441.8 925.0,440.2 926,438 C927.0,435.8 929.0,432.3 930,431 C931.0,429.7 931.7,430.2 932,430" fill="none" stroke="#e4e0f4" stroke-width="1.35" stroke-linejoin="round" stroke-linecap="round"/>
<rect x="396.5" y="650" width="207" height="35.3" rx="8" fill="#17151e" stroke="#2c2a36" stroke-width="1"/>
<rect x="400.5" y="654.7" width="26.3" height="26.3" rx="3.6" fill="#7866f4"/>
<path d="M407,661.3 L420.3,666.9 L414.9,668.9 L412.4,674.2 Z M414.9,668.9 L419.4,673.6" fill="none" stroke="#ffffff" stroke-width="1.5" stroke-linejoin="round" stroke-linecap="round"/>
<g fill="none" stroke="#8f8c99" stroke-width="1.3" stroke-linecap="round" stroke-linejoin="round"><path d="M431,666.3 L434.2,669.2 L437.4,666.3"/><path d="M568.5,666 L571,668.5 L573.5,666"/></g>
<g fill="none" stroke="#a3a0ac" stroke-width="1.6" stroke-linecap="round" stroke-linejoin="round"><path d="M457.3,661.4 L454.6,666.3 Q453.6,669.4 456.6,669.6 Q458.2,669.6 459.2,667.6 L461.8,663.6 M455.6,669.4 L453,673.6"/><circle cx="452.9" cy="673.7" r="0.9" fill="#a3a0ac"/><circle cx="482.6" cy="663.5" r="2.3"/><circle cx="482.6" cy="671.7" r="2.3"/><path d="M484.6,670.2 L493.3,661.4 M488.4,667.8 L493.3,674.3"/><circle cx="550" cy="666" r="5.3"/><path d="M554,670 L558,674"/></g>
<g fill="none" stroke="#a3a0ac" stroke-width="1.2" stroke-linecap="round"><path d="M510.8,667.5 L511.6,664 L512.6,672.5 L513.6,661.6 L514.6,673.8 L515.8,663 L516.8,670.5 L517.8,662 L518.8,674 L519.8,662.5 L520.4,668"/></g><path d="M521,665.8 L524,668 L521,670.2 Z" fill="#a3a0ac"/>
<rect x="534.7" y="655" width="1.2" height="25" fill="#2e2c38"/>
<rect x="581.3" y="655" width="1.2" height="25" fill="#2e2c38"/>
<circle cx="590.6" cy="663.2" r="1.25" fill="#a3a0ac"/>
<circle cx="590.6" cy="667.4" r="1.25" fill="#a3a0ac"/>
<circle cx="590.6" cy="671.6" r="1.25" fill="#a3a0ac"/>
<circle cx="594.8" cy="663.2" r="1.25" fill="#a3a0ac"/>
<circle cx="594.8" cy="667.4" r="1.25" fill="#a3a0ac"/>
<circle cx="594.8" cy="671.6" r="1.25" fill="#a3a0ac"/>
<rect x="5" y="733" width="963" height="59.5" rx="7" fill="#18161f"/>
<rect x="46.3" y="733" width="1.2" height="59.5" fill="#34313d"/>
<rect x="5" y="761.6" width="41.3" height="1.2" fill="#34313d"/>
<g fill="none" stroke="#8f8c99" stroke-width="1.5" stroke-linecap="round" stroke-linejoin="round"><path d="M19.5,743.5 H31 M23,743.5 V741.2 H27.5 V743.5 M20.8,743.5 L21.5,754.5 H29 L29.7,743.5 M23.8,746.8 V751.3 M26.7,746.8 V751.3"/><path d="M19.2,777.8 H31.6 M21.5,770.9 L25.3,775.2 L29.1,770.9 M21.5,784.7 L25.3,780.4 L29.1,784.7"/></g>
<clipPath id="ovpanel"><rect x="5" y="733" width="963" height="59.5"/></clipPath><rect x="58" y="735" width="930" height="55.5" rx="4" fill="#15131b" stroke="#34323d" stroke-width="1.2" clip-path="url(#ovpanel)"/>
<rect x="95.8" y="735.5" width="467.6" height="54.5" rx="4" fill="#2b2550" stroke="#7a6bea" stroke-width="1.6"/>
<clipPath id="ovclip"><rect x="58" y="735" width="910" height="56"/></clipPath>
<clipPath id="selclip"><rect x="96" y="735" width="467.5" height="56"/></clipPath>
<g clip-path="url(#ovclip)">
<path d="M69,762.7 H968" stroke="#423f4c" stroke-width="1"/>
<path d="M69.0,762.1 L70.0,762.1 L71.0,762.1 L72.0,762.1 L73.0,762.1 L74.0,762.1 L75.0,762.1 L76.0,762.1 L77.0,762.1 L78.0,762.1 L79.0,762.1 L80.0,762.1 L81.0,762.1 L82.0,762.1 L83.0,762.1 L84.0,762.1 L85.0,762.1 L86.0,762.1 L87.0,762.1 L88.0,762.1 L89.0,762.1 L90.0,762.1 L91.0,762.1 L92.0,762.1 L93.0,762.1 L94.0,762.1 L95.0,762.1 L96.0,761.5 L97.0,760.8 L98.0,760.1 L99.0,759.0 L100.0,758.2 L101.0,758.1 L102.0,758.3 L103.0,758.5 L104.0,758.0 L105.0,757.8 L106.0,758.5 L107.0,758.9 L108.0,759.1 L109.0,759.2 L110.0,759.3 L111.0,760.2 L112.0,760.6 L113.0,761.2 L114.0,761.7 L115.0,757.1 L116.0,757.6 L117.0,757.3 L118.0,757.3 L119.0,756.8 L120.0,755.9 L121.0,756.7 L122.0,756.5 L123.0,756.7 L124.0,757.1 L125.0,757.2 L126.0,757.4 L127.0,757.9 L128.0,757.5 L129.0,756.6 L130.0,755.9 L131.0,756.5 L132.0,756.5 L133.0,755.8 L134.0,755.9 L135.0,755.9 L136.0,756.4 L137.0,757.8 L138.0,758.3 L139.0,759.6 L140.0,760.8 L141.0,761.0 L142.0,761.5 L143.0,761.7 L144.0,760.8 L145.0,760.8 L146.0,761.0 L147.0,761.0 L148.0,758.1 L149.0,755.6 L150.0,755.0 L151.0,755.5 L152.0,755.6 L153.0,754.6 L154.0,755.3 L155.0,754.7 L156.0,754.3 L157.0,755.3 L158.0,755.0 L159.0,755.4 L160.0,755.5 L161.0,755.4 L162.0,755.1 L163.0,755.8 L164.0,756.1 L165.0,755.9 L166.0,756.1 L167.0,756.9 L168.0,756.6 L169.0,756.9 L170.0,757.7 L171.0,758.2 L172.0,758.5 L173.0,758.4 L174.0,758.8 L175.0,758.9 L176.0,759.6 L177.0,759.9 L178.0,759.9 L179.0,760.5 L180.0,760.8 L181.0,761.1 L182.0,761.5 L183.0,761.7 L184.0,762.1 L185.0,762.1 L186.0,762.1 L187.0,762.1 L188.0,762.1 L189.0,762.1 L190.0,762.1 L191.0,762.1 L192.0,762.1 L193.0,762.1 L194.0,762.1 L195.0,762.1 L196.0,762.1 L197.0,762.1 L198.0,762.1 L199.0,762.1 L200.0,762.1 L201.0,762.1 L202.0,762.1 L203.0,762.1 L204.0,762.1 L205.0,761.8 L206.0,761.4 L207.0,761.1 L208.0,761.0 L209.0,759.9 L210.0,759.4 L211.0,758.0 L212.0,757.8 L213.0,756.9 L214.0,756.7 L215.0,756.1 L216.0,756.8 L217.0,756.0 L218.0,755.4 L219.0,755.3 L220.0,756.0 L221.0,755.7 L222.0,755.1 L223.0,755.6 L224.0,754.3 L225.0,754.2 L226.0,753.7 L227.0,754.6 L228.0,755.1 L229.0,754.8 L230.0,755.0 L231.0,754.5 L232.0,754.4 L233.0,754.9 L234.0,755.6 L235.0,755.2 L236.0,755.3 L237.0,754.5 L238.0,754.3 L239.0,754.4 L240.0,754.1 L241.0,753.9 L242.0,754.1 L243.0,756.2 L244.0,756.6 L245.0,758.4 L246.0,758.2 L247.0,759.0 L248.0,759.4 L249.0,759.5 L250.0,759.9 L251.0,758.8 L252.0,757.8 L253.0,757.7 L254.0,755.7 L255.0,755.7 L256.0,755.0 L257.0,754.6 L258.0,755.4 L259.0,755.5 L260.0,755.6 L261.0,755.1 L262.0,754.8 L263.0,755.0 L264.0,755.8 L265.0,755.4 L266.0,754.2 L267.0,754.0 L268.0,754.7 L269.0,756.7 L270.0,759.6 L271.0,761.7 L272.0,758.9 L273.0,755.5 L274.0,754.5 L275.0,754.7 L276.0,754.9 L277.0,754.3 L278.0,755.3 L279.0,754.9 L280.0,754.9 L281.0,755.0 L282.0,754.6 L283.0,754.7 L284.0,756.0 L285.0,755.5 L286.0,758.2 L287.0,761.7 L288.0,755.4 L289.0,756.4 L290.0,756.1 L291.0,755.9 L292.0,757.5 L293.0,759.2 L294.0,760.8 L295.0,760.2 L296.0,759.7 L297.0,759.0 L298.0,758.5 L299.0,758.0 L300.0,757.6 L301.0,757.4 L302.0,757.1 L303.0,756.8 L304.0,756.1 L305.0,756.7 L306.0,755.9 L307.0,755.7 L308.0,755.8 L309.0,755.8 L310.0,756.0 L311.0,756.0 L312.0,756.1 L313.0,756.4 L314.0,757.0 L315.0,757.7 L316.0,758.9 L317.0,758.9 L318.0,759.0 L319.0,758.2 L320.0,757.9 L321.0,757.9 L322.0,756.9 L323.0,757.3 L324.0,756.6 L325.0,756.5 L326.0,757.1 L327.0,756.6 L328.0,757.1 L329.0,757.1 L330.0,756.8 L331.0,756.1 L332.0,756.9 L333.0,756.2 L334.0,757.0 L335.0,756.3 L336.0,756.6 L337.0,757.1 L338.0,756.7 L339.0,756.7 L340.0,757.5 L341.0,757.1 L342.0,757.0 L343.0,758.2 L344.0,759.3 L345.0,759.9 L346.0,760.7 L347.0,761.7 L348.0,761.7 L349.0,761.7 L350.0,761.7 L351.0,761.7 L352.0,759.9 L353.0,758.6 L354.0,757.7 L355.0,758.3 L356.0,757.9 L357.0,758.3 L358.0,757.7 L359.0,757.9 L360.0,759.4 L361.0,759.9 L362.0,760.8 L363.0,760.4 L364.0,760.0 L365.0,758.8 L366.0,758.7 L367.0,757.5 L368.0,757.3 L369.0,757.8 L370.0,757.0 L371.0,757.5 L372.0,757.0 L373.0,757.7 L374.0,756.9 L375.0,757.5 L376.0,757.2 L377.0,757.4 L378.0,756.9 L379.0,756.8 L380.0,757.4 L381.0,756.8 L382.0,757.5 L383.0,757.1 L384.0,757.1 L385.0,756.7 L386.0,757.2 L387.0,756.9 L388.0,757.5 L389.0,756.8 L390.0,758.6 L391.0,759.7 L392.0,760.7 L393.0,760.5 L394.0,760.3 L395.0,760.0 L396.0,759.8 L397.0,759.2 L398.0,758.2 L399.0,758.3 L400.0,757.7 L401.0,757.5 L402.0,757.2 L403.0,757.5 L404.0,756.9 L405.0,757.2 L406.0,756.1 L407.0,756.4 L408.0,756.0 L409.0,757.0 L410.0,756.8 L411.0,756.2 L412.0,756.7 L413.0,756.4 L414.0,756.5 L415.0,756.4 L416.0,756.4 L417.0,757.4 L418.0,756.9 L419.0,757.6 L420.0,757.7 L421.0,757.9 L422.0,759.0 L423.0,759.6 L424.0,760.4 L425.0,761.4 L426.0,761.5 L427.0,761.4 L428.0,761.6 L429.0,761.7 L430.0,761.6 L431.0,761.6 L432.0,761.7 L433.0,761.7 L434.0,761.7 L435.0,761.7 L436.0,761.7 L437.0,761.7 L438.0,761.7 L439.0,761.7 L440.0,761.7 L441.0,761.7 L442.0,761.7 L443.0,761.7 L444.0,761.7 L445.0,761.7 L446.0,761.7 L447.0,761.7 L448.0,761.7 L449.0,761.7 L450.0,761.7 L451.0,761.7 L452.0,761.7 L453.0,761.7 L454.0,761.7 L455.0,761.7 L456.0,761.7 L457.0,761.7 L458.0,761.7 L459.0,761.7 L460.0,751.5 L461.0,754.1 L462.0,756.9 L463.0,757.7 L464.0,758.1 L465.0,758.9 L466.0,759.3 L467.0,759.1 L468.0,758.7 L469.0,759.1 L470.0,758.9 L471.0,758.4 L472.0,758.8 L473.0,758.1 L474.0,758.6 L475.0,757.8 L476.0,757.3 L477.0,756.3 L478.0,755.4 L479.0,755.1 L480.0,755.3 L481.0,755.7 L482.0,756.5 L483.0,756.1 L484.0,756.2 L485.0,756.5 L486.0,755.8 L487.0,757.3 L488.0,758.7 L489.0,760.1 L490.0,758.0 L491.0,756.6 L492.0,756.5 L493.0,757.1 L494.0,757.3 L495.0,757.5 L496.0,758.5 L497.0,757.8 L498.0,758.0 L499.0,756.7 L500.0,757.5 L501.0,756.3 L502.0,756.8 L503.0,755.8 L504.0,756.2 L505.0,756.5 L506.0,757.2 L507.0,756.5 L508.0,757.0 L509.0,757.5 L510.0,757.5 L511.0,757.7 L512.0,757.5 L513.0,758.5 L514.0,759.1 L515.0,758.8 L516.0,758.9 L517.0,758.0 L518.0,757.1 L519.0,756.6 L520.0,756.0 L521.0,756.0 L522.0,756.5 L523.0,756.5 L524.0,757.1 L525.0,756.9 L526.0,757.6 L527.0,757.2 L528.0,756.7 L529.0,755.7 L530.0,755.0 L531.0,755.1 L532.0,753.0 L533.0,753.4 L534.0,752.4 L535.0,751.1 L536.0,751.1 L537.0,750.7 L538.0,750.7 L539.0,750.6 L540.0,748.7 L541.0,748.3 L542.0,748.9 L543.0,745.9 L544.0,750.4 L545.0,752.4 L546.0,753.7 L547.0,757.2 L548.0,760.0 L549.0,760.2 L550.0,759.8 L551.0,760.2 L552.0,760.1 L553.0,759.8 L554.0,759.2 L555.0,758.4 L556.0,758.1 L557.0,758.7 L558.0,759.4 L559.0,760.2 L560.0,761.0 L561.0,760.8 L562.0,760.5 L563.0,759.9 L564.0,759.6 L565.0,759.5 L566.0,758.9 L567.0,758.9 L568.0,758.2 L569.0,758.0 L570.0,758.5 L571.0,759.5 L572.0,760.7 L573.0,761.7 L574.0,761.0 L575.0,760.4 L576.0,759.6 L577.0,759.2 L578.0,759.3 L579.0,758.9 L580.0,758.6 L581.0,758.7 L582.0,758.5 L583.0,758.6 L584.0,758.3 L585.0,758.0 L586.0,758.5 L587.0,758.5 L588.0,758.7 L589.0,758.4 L590.0,758.4 L591.0,758.5 L592.0,758.9 L593.0,758.6 L594.0,758.7 L595.0,760.0 L596.0,760.8 L597.0,761.7 L598.0,761.7 L599.0,761.7 L600.0,761.7 L601.0,755.5 L602.0,749.3 L603.0,749.5 L604.0,749.6 L605.0,748.2 L606.0,753.9 L607.0,758.0 L608.0,760.0 L609.0,761.7 L610.0,761.0 L611.0,759.9 L612.0,758.9 L613.0,759.9 L614.0,760.1 L615.0,760.9 L616.0,761.0 L617.0,761.0 L618.0,760.9 L619.0,760.8 L620.0,760.8 L621.0,760.7 L622.0,760.7 L623.0,761.1 L624.0,761.5 L625.0,761.7 L626.0,761.0 L627.0,760.1 L628.0,759.0 L629.0,757.9 L630.0,757.2 L631.0,756.1 L632.0,755.6 L633.0,753.8 L634.0,753.9 L635.0,753.9 L636.0,754.3 L637.0,754.6 L638.0,753.4 L639.0,753.7 L640.0,754.1 L641.0,753.1 L642.0,753.1 L643.0,754.6 L644.0,753.6 L645.0,754.6 L646.0,754.6 L647.0,754.6 L648.0,754.9 L649.0,754.4 L650.0,754.6 L651.0,754.0 L652.0,754.2 L653.0,754.1 L654.0,754.9 L655.0,757.6 L656.0,758.8 L657.0,758.1 L658.0,756.4 L659.0,754.6 L660.0,753.4 L661.0,756.8 L662.0,758.8 L663.0,761.7 L664.0,761.7 L665.0,761.7 L666.0,761.7 L667.0,761.7 L668.0,761.7 L669.0,761.7 L670.0,760.4 L671.0,758.8 L672.0,759.3 L673.0,759.3 L674.0,758.9 L675.0,758.9 L676.0,758.9 L677.0,758.8 L678.0,759.2 L679.0,758.9 L680.0,759.4 L681.0,759.6 L682.0,760.5 L683.0,761.0 L684.0,761.7 L685.0,761.2 L686.0,761.0 L687.0,760.3 L688.0,759.9 L689.0,759.6 L690.0,759.0 L691.0,758.7 L692.0,759.0 L693.0,759.0 L694.0,759.4 L695.0,759.1 L696.0,759.1 L697.0,758.8 L698.0,759.1 L699.0,758.9 L700.0,759.2 L701.0,759.5 L702.0,760.3 L703.0,761.1 L704.0,761.7 L705.0,759.6 L706.0,757.0 L707.0,755.2 L708.0,753.5 L709.0,751.9 L710.0,751.6 L711.0,752.2 L712.0,751.6 L713.0,751.7 L714.0,752.8 L715.0,752.5 L716.0,752.5 L717.0,750.5 L718.0,750.7 L719.0,751.0 L720.0,750.8 L721.0,750.5 L722.0,749.8 L723.0,748.9 L724.0,749.0 L725.0,749.1 L726.0,749.3 L727.0,749.1 L728.0,750.5 L729.0,752.3 L730.0,754.6 L731.0,755.9 L732.0,754.7 L733.0,755.1 L734.0,754.9 L735.0,755.2 L736.0,756.0 L737.0,755.7 L738.0,755.5 L739.0,755.8 L740.0,755.3 L741.0,755.8 L742.0,755.2 L743.0,755.1 L744.0,755.4 L745.0,755.6 L746.0,757.3 L747.0,758.8 L748.0,760.1 L749.0,760.4 L750.0,761.0 L751.0,761.4 L752.0,761.7 L753.0,761.2 L754.0,760.4 L755.0,759.6 L756.0,758.9 L757.0,758.8 L758.0,758.9 L759.0,758.4 L760.0,758.3 L761.0,758.3 L762.0,758.4 L763.0,758.4 L764.0,758.4 L765.0,758.6 L766.0,757.9 L767.0,758.3 L768.0,758.2 L769.0,758.3 L770.0,758.5 L771.0,759.0 L772.0,758.9 L773.0,758.7 L774.0,759.2 L775.0,759.5 L776.0,760.5 L777.0,761.0 L778.0,761.7 L779.0,760.1 L780.0,758.6 L781.0,757.6 L782.0,757.6 L783.0,757.8 L784.0,757.1 L785.0,757.3 L786.0,758.0 L787.0,757.9 L788.0,757.8 L789.0,758.4 L790.0,757.8 L791.0,758.7 L792.0,759.7 L793.0,760.1 L794.0,761.2 L795.0,761.7 L796.0,759.8 L797.0,758.6 L798.0,758.0 L799.0,758.5 L800.0,757.9 L801.0,758.2 L802.0,757.9 L803.0,758.2 L804.0,758.6 L805.0,758.3 L806.0,757.8 L807.0,758.5 L808.0,758.1 L809.0,758.2 L810.0,758.0 L811.0,758.1 L812.0,758.4 L813.0,759.0 L814.0,758.9 L815.0,758.9 L816.0,759.1 L817.0,759.2 L818.0,759.5 L819.0,759.7 L820.0,759.8 L821.0,760.4 L822.0,760.4 L823.0,760.3 L824.0,760.7 L825.0,760.8 L826.0,761.2 L827.0,761.3 L828.0,761.5 L829.0,761.5 L830.0,761.7 L831.0,761.7 L832.0,761.7 L833.0,761.7 L834.0,761.7 L835.0,761.7 L836.0,761.7 L837.0,761.7 L838.0,761.7 L839.0,761.7 L840.0,761.7 L841.0,761.7 L842.0,761.7 L843.0,761.7 L844.0,761.7 L845.0,761.7 L846.0,761.7 L847.0,761.7 L848.0,761.7 L849.0,761.7 L850.0,759.1 L851.0,756.4 L852.0,754.7 L853.0,755.0 L854.0,753.6 L855.0,754.8 L856.0,754.2 L857.0,753.5 L858.0,755.5 L859.0,758.4 L860.0,761.0 L861.0,760.9 L862.0,760.9 L863.0,761.0 L864.0,760.9 L865.0,760.9 L866.0,760.9 L867.0,760.8 L868.0,758.9 L869.0,756.9 L870.0,754.8 L871.0,756.1 L872.0,755.0 L873.0,755.9 L874.0,755.0 L875.0,755.4 L876.0,754.8 L877.0,755.5 L878.0,755.6 L879.0,754.8 L880.0,755.0 L881.0,755.7 L882.0,755.2 L883.0,754.9 L884.0,754.9 L885.0,755.5 L886.0,754.7 L887.0,755.9 L888.0,755.7 L889.0,755.1 L890.0,755.8 L891.0,756.8 L892.0,758.4 L893.0,760.1 L894.0,761.7 L895.0,760.0 L896.0,757.5 L897.0,756.2 L898.0,753.4 L899.0,753.8 L900.0,753.7 L901.0,753.3 L902.0,754.4 L903.0,752.8 L904.0,753.6 L905.0,753.8 L906.0,753.5 L907.0,753.2 L908.0,753.8 L909.0,753.6 L910.0,753.0 L911.0,753.7 L912.0,753.8 L913.0,752.9 L914.0,753.1 L915.0,754.7 L916.0,754.6 L917.0,754.7 L918.0,754.1 L919.0,755.4 L920.0,755.5 L921.0,754.9 L922.0,754.8 L923.0,756.0 L924.0,756.6 L925.0,757.7 L926.0,758.5 L927.0,758.8 L928.0,758.8 L929.0,759.4 L930.0,759.5 L931.0,759.5 L932.0,759.7 L933.0,759.5 L934.0,760.0 L935.0,760.2 L936.0,760.5 L937.0,760.9 L938.0,761.0 L939.0,761.4 L940.0,761.7 L941.0,761.7 L942.0,761.7 L943.0,761.7 L944.0,761.7 L945.0,761.7 L946.0,761.7 L947.0,761.7 L948.0,761.7 L949.0,761.7 L950.0,761.7 L951.0,761.7 L952.0,761.7 L953.0,761.7 L954.0,761.7 L955.0,761.7 L956.0,761.7 L957.0,761.7 L958.0,761.7 L959.0,761.3 L960.0,760.8 L961.0,760.2 L962.0,759.6 L963.0,759.1 L964.0,758.1 L965.0,757.8 L966.0,757.0 L967.0,757.1 L968.0,756.9 L968.0,768.8 L967.0,768.3 L966.0,768.4 L965.0,767.2 L964.0,767.0 L963.0,766.7 L962.0,765.9 L961.0,765.4 L960.0,764.5 L959.0,764.3 L958.0,763.7 L957.0,763.7 L956.0,763.7 L955.0,763.7 L954.0,763.7 L953.0,763.7 L952.0,763.7 L951.0,763.7 L950.0,763.7 L949.0,763.7 L948.0,763.7 L947.0,763.7 L946.0,763.7 L945.0,763.7 L944.0,763.7 L943.0,763.7 L942.0,763.7 L941.0,763.7 L940.0,763.7 L939.0,763.9 L938.0,764.4 L937.0,764.8 L936.0,765.1 L935.0,765.2 L934.0,765.4 L933.0,765.7 L932.0,765.8 L931.0,765.8 L930.0,765.7 L929.0,766.2 L928.0,766.3 L927.0,766.5 L926.0,766.7 L925.0,767.6 L924.0,768.1 L923.0,769.8 L922.0,770.4 L921.0,769.4 L920.0,771.1 L919.0,770.3 L918.0,770.8 L917.0,771.0 L916.0,771.7 L915.0,771.1 L914.0,771.6 L913.0,772.4 L912.0,772.1 L911.0,772.5 L910.0,771.1 L909.0,771.0 L908.0,770.9 L907.0,771.2 L906.0,771.6 L905.0,771.0 L904.0,772.1 L903.0,772.4 L902.0,771.9 L901.0,772.4 L900.0,772.5 L899.0,771.8 L898.0,772.5 L897.0,770.3 L896.0,767.8 L895.0,765.6 L894.0,763.7 L893.0,765.0 L892.0,766.9 L891.0,768.8 L890.0,770.7 L889.0,769.5 L888.0,770.2 L887.0,770.0 L886.0,769.9 L885.0,769.8 L884.0,769.4 L883.0,770.5 L882.0,769.5 L881.0,769.7 L880.0,770.3 L879.0,770.0 L878.0,770.7 L877.0,769.7 L876.0,769.9 L875.0,770.0 L874.0,770.6 L873.0,770.5 L872.0,770.1 L871.0,769.7 L870.0,770.6 L869.0,768.5 L868.0,766.5 L867.0,764.5 L866.0,764.5 L865.0,764.4 L864.0,764.6 L863.0,764.4 L862.0,764.5 L861.0,764.4 L860.0,764.6 L859.0,767.0 L858.0,769.5 L857.0,771.7 L856.0,772.1 L855.0,770.9 L854.0,771.2 L853.0,770.8 L852.0,770.7 L851.0,768.9 L850.0,765.7 L849.0,763.7 L848.0,763.7 L847.0,763.7 L846.0,763.7 L845.0,763.7 L844.0,763.7 L843.0,763.7 L842.0,763.7 L841.0,763.7 L840.0,763.7 L839.0,763.7 L838.0,763.7 L837.0,763.7 L836.0,763.7 L835.0,763.7 L834.0,763.7 L833.0,763.7 L832.0,763.7 L831.0,763.7 L830.0,763.7 L829.0,763.9 L828.0,763.9 L827.0,764.2 L826.0,764.4 L825.0,764.5 L824.0,764.8 L823.0,765.1 L822.0,765.0 L821.0,765.4 L820.0,765.3 L819.0,765.4 L818.0,765.5 L817.0,766.3 L816.0,766.4 L815.0,766.5 L814.0,766.6 L813.0,767.1 L812.0,766.6 L811.0,767.0 L810.0,767.3 L809.0,767.0 L808.0,767.5 L807.0,767.4 L806.0,767.7 L805.0,767.2 L804.0,767.3 L803.0,767.5 L802.0,767.1 L801.0,767.3 L800.0,767.0 L799.0,767.3 L798.0,767.2 L797.0,767.1 L796.0,765.6 L795.0,763.7 L794.0,764.4 L793.0,765.1 L792.0,765.8 L791.0,766.5 L790.0,767.1 L789.0,767.7 L788.0,767.0 L787.0,767.6 L786.0,767.4 L785.0,767.4 L784.0,767.8 L783.0,767.7 L782.0,767.7 L781.0,767.9 L780.0,766.7 L779.0,765.1 L778.0,763.7 L777.0,764.2 L776.0,765.1 L775.0,765.7 L774.0,766.2 L773.0,766.4 L772.0,766.3 L771.0,766.7 L770.0,766.9 L769.0,767.1 L768.0,766.6 L767.0,766.8 L766.0,767.1 L765.0,766.8 L764.0,766.8 L763.0,767.1 L762.0,767.3 L761.0,766.7 L760.0,766.7 L759.0,766.6 L758.0,766.4 L757.0,766.5 L756.0,766.6 L755.0,765.6 L754.0,765.1 L753.0,764.2 L752.0,763.7 L751.0,764.1 L750.0,764.6 L749.0,765.0 L748.0,765.2 L747.0,767.3 L746.0,768.2 L745.0,770.1 L744.0,770.0 L743.0,770.5 L742.0,770.2 L741.0,770.7 L740.0,769.5 L739.0,770.1 L738.0,770.0 L737.0,769.9 L736.0,769.8 L735.0,769.8 L734.0,769.8 L733.0,769.8 L732.0,770.4 L731.0,770.1 L730.0,771.7 L729.0,772.8 L728.0,773.9 L727.0,776.3 L726.0,776.9 L725.0,777.1 L724.0,776.1 L723.0,775.7 L722.0,774.8 L721.0,774.6 L720.0,773.9 L719.0,774.0 L718.0,774.9 L717.0,774.5 L716.0,772.7 L715.0,774.3 L714.0,772.7 L713.0,774.1 L712.0,773.3 L711.0,772.8 L710.0,773.6 L709.0,772.6 L708.0,772.3 L707.0,769.9 L706.0,768.3 L705.0,765.7 L704.0,763.7 L703.0,764.2 L702.0,765.1 L701.0,765.9 L700.0,766.2 L699.0,766.6 L698.0,766.4 L697.0,766.3 L696.0,766.7 L695.0,766.3 L694.0,766.4 L693.0,766.2 L692.0,766.3 L691.0,766.3 L690.0,766.6 L689.0,766.1 L688.0,765.4 L687.0,765.2 L686.0,764.5 L685.0,763.9 L684.0,763.7 L683.0,764.2 L682.0,765.0 L681.0,765.6 L680.0,766.1 L679.0,766.5 L678.0,766.6 L677.0,766.1 L676.0,766.3 L675.0,766.5 L674.0,766.2 L673.0,766.0 L672.0,766.4 L671.0,766.6 L670.0,765.1 L669.0,763.7 L668.0,763.7 L667.0,763.7 L666.0,763.7 L665.0,763.7 L664.0,763.7 L663.0,763.7 L662.0,766.6 L661.0,768.9 L660.0,771.5 L659.0,771.2 L658.0,768.7 L657.0,768.1 L656.0,766.5 L655.0,768.0 L654.0,770.5 L653.0,771.6 L652.0,771.2 L651.0,770.7 L650.0,770.5 L649.0,771.7 L648.0,770.1 L647.0,770.8 L646.0,771.2 L645.0,771.2 L644.0,770.8 L643.0,772.2 L642.0,770.9 L641.0,771.8 L640.0,772.3 L639.0,772.3 L638.0,772.4 L637.0,771.6 L636.0,771.9 L635.0,770.9 L634.0,771.0 L633.0,771.3 L632.0,770.3 L631.0,768.8 L630.0,767.7 L629.0,767.5 L628.0,766.7 L627.0,765.6 L626.0,764.4 L625.0,763.7 L624.0,763.8 L623.0,764.3 L622.0,764.7 L621.0,764.7 L620.0,764.4 L619.0,764.3 L618.0,764.4 L617.0,764.6 L616.0,764.4 L615.0,764.4 L614.0,765.0 L613.0,765.8 L612.0,766.0 L611.0,765.4 L610.0,764.6 L609.0,763.7 L608.0,765.2 L607.0,767.6 L606.0,772.1 L605.0,776.0 L604.0,775.2 L603.0,776.7 L602.0,776.1 L601.0,769.8 L600.0,763.7 L599.0,763.7 L598.0,763.7 L597.0,763.7 L596.0,764.6 L595.0,765.7 L594.0,766.0 L593.0,766.8 L592.0,766.3 L591.0,766.4 L590.0,766.6 L589.0,767.2 L588.0,767.4 L587.0,767.2 L586.0,767.2 L585.0,767.4 L584.0,767.2 L583.0,767.3 L582.0,766.6 L581.0,767.1 L580.0,766.3 L579.0,766.7 L578.0,766.5 L577.0,766.0 L576.0,765.8 L575.0,765.0 L574.0,764.3 L573.0,763.7 L572.0,764.6 L571.0,765.8 L570.0,766.8 L569.0,767.4 L568.0,766.8 L567.0,766.9 L566.0,766.2 L565.0,766.1 L564.0,765.9 L563.0,765.3 L562.0,764.9 L561.0,764.9 L560.0,764.4 L559.0,765.4 L558.0,766.2 L557.0,766.3 L556.0,767.0 L555.0,766.7 L554.0,766.0 L553.0,765.4 L552.0,765.7 L551.0,765.2 L550.0,765.5 L549.0,765.3 L548.0,765.6 L547.0,769.1 L546.0,771.3 L545.0,774.1 L544.0,777.0 L543.0,779.1 L542.0,778.2 L541.0,777.4 L540.0,777.6 L539.0,774.9 L538.0,775.5 L537.0,774.6 L536.0,774.0 L535.0,773.2 L534.0,773.1 L533.0,773.1 L532.0,771.7 L531.0,770.9 L530.0,770.7 L529.0,769.1 L528.0,768.3 L527.0,767.7 L526.0,768.4 L525.0,768.7 L524.0,769.0 L523.0,769.1 L522.0,768.3 L521.0,769.3 L520.0,768.5 L519.0,768.4 L518.0,768.4 L517.0,767.6 L516.0,766.7 L515.0,766.2 L514.0,766.9 L513.0,767.4 L512.0,767.5 L511.0,767.6 L510.0,768.5 L509.0,768.1 L508.0,768.6 L507.0,768.9 L506.0,768.8 L505.0,768.8 L504.0,769.1 L503.0,768.9 L502.0,768.8 L501.0,768.3 L500.0,768.2 L499.0,768.5 L498.0,768.1 L497.0,767.1 L496.0,767.3 L495.0,767.9 L494.0,767.8 L493.0,768.7 L492.0,768.3 L491.0,769.7 L490.0,766.9 L489.0,765.5 L488.0,766.4 L487.0,768.0 L486.0,769.7 L485.0,769.8 L484.0,768.9 L483.0,769.7 L482.0,769.0 L481.0,769.1 L480.0,769.1 L479.0,770.5 L478.0,769.7 L477.0,769.0 L476.0,768.7 L475.0,767.7 L474.0,767.6 L473.0,766.9 L472.0,766.7 L471.0,766.5 L470.0,767.1 L469.0,767.0 L468.0,766.4 L467.0,766.5 L466.0,766.5 L465.0,766.9 L464.0,767.4 L463.0,767.9 L462.0,768.3 L461.0,771.3 L460.0,773.5 L459.0,763.7 L458.0,763.7 L457.0,763.7 L456.0,763.7 L455.0,763.7 L454.0,763.7 L453.0,763.7 L452.0,763.7 L451.0,763.7 L450.0,763.7 L449.0,763.7 L448.0,763.7 L447.0,763.7 L446.0,763.7 L445.0,763.7 L444.0,763.7 L443.0,763.7 L442.0,763.7 L441.0,763.7 L440.0,763.7 L439.0,763.7 L438.0,763.7 L437.0,763.7 L436.0,763.7 L435.0,763.7 L434.0,763.7 L433.0,763.7 L432.0,763.7 L431.0,763.8 L430.0,763.8 L429.0,763.8 L428.0,764.0 L427.0,763.9 L426.0,764.0 L425.0,764.1 L424.0,765.0 L423.0,765.8 L422.0,766.2 L421.0,767.7 L420.0,767.6 L419.0,768.5 L418.0,768.2 L417.0,768.4 L416.0,768.6 L415.0,769.0 L414.0,769.1 L413.0,768.6 L412.0,768.6 L411.0,768.4 L410.0,769.5 L409.0,768.9 L408.0,768.8 L407.0,769.2 L406.0,768.6 L405.0,768.6 L404.0,768.3 L403.0,768.3 L402.0,768.1 L401.0,768.1 L400.0,767.8 L399.0,767.1 L398.0,766.9 L397.0,766.2 L396.0,765.4 L395.0,765.1 L394.0,765.0 L393.0,764.6 L392.0,764.7 L391.0,765.6 L390.0,767.2 L389.0,767.9 L388.0,768.4 L387.0,767.7 L386.0,768.6 L385.0,768.6 L384.0,767.8 L383.0,767.9 L382.0,768.1 L381.0,768.1 L380.0,768.0 L379.0,768.2 L378.0,768.3 L377.0,768.2 L376.0,768.2 L375.0,768.4 L374.0,767.6 L373.0,768.1 L372.0,768.3 L371.0,767.8 L370.0,768.6 L369.0,768.5 L368.0,768.4 L367.0,767.8 L366.0,767.0 L365.0,766.1 L364.0,765.6 L363.0,765.0 L362.0,764.4 L361.0,765.2 L360.0,766.7 L359.0,767.1 L358.0,767.0 L357.0,767.2 L356.0,766.9 L355.0,766.9 L354.0,767.2 L353.0,767.6 L352.0,765.4 L351.0,763.7 L350.0,763.7 L349.0,763.7 L348.0,763.7 L347.0,763.7 L346.0,764.4 L345.0,765.3 L344.0,766.6 L343.0,767.2 L342.0,767.6 L341.0,767.8 L340.0,768.1 L339.0,768.1 L338.0,768.3 L337.0,769.1 L336.0,769.3 L335.0,768.9 L334.0,768.7 L333.0,769.5 L332.0,769.4 L331.0,769.3 L330.0,768.5 L329.0,769.1 L328.0,768.4 L327.0,768.7 L326.0,768.0 L325.0,768.5 L324.0,768.9 L323.0,768.0 L322.0,768.5 L321.0,768.3 L320.0,767.4 L319.0,767.2 L318.0,766.8 L317.0,766.3 L316.0,767.3 L315.0,767.5 L314.0,768.2 L313.0,768.7 L312.0,768.8 L311.0,769.0 L310.0,768.5 L309.0,769.3 L308.0,769.5 L307.0,769.7 L306.0,768.7 L305.0,769.3 L304.0,769.1 L303.0,768.5 L302.0,768.1 L301.0,768.3 L300.0,767.4 L299.0,767.3 L298.0,767.5 L297.0,766.8 L296.0,766.1 L295.0,765.4 L294.0,764.4 L293.0,766.0 L292.0,767.6 L291.0,768.5 L290.0,769.6 L289.0,770.3 L288.0,769.4 L287.0,763.7 L286.0,766.7 L285.0,770.1 L284.0,770.5 L283.0,770.5 L282.0,769.8 L281.0,771.2 L280.0,770.7 L279.0,771.3 L278.0,771.4 L277.0,770.7 L276.0,769.9 L275.0,770.5 L274.0,769.6 L273.0,769.7 L272.0,766.7 L271.0,763.7 L270.0,766.3 L269.0,768.7 L268.0,771.2 L267.0,771.0 L266.0,770.7 L265.0,770.7 L264.0,769.7 L263.0,770.6 L262.0,770.1 L261.0,770.4 L260.0,769.9 L259.0,769.9 L258.0,771.2 L257.0,770.3 L256.0,771.3 L255.0,770.6 L254.0,769.2 L253.0,767.9 L252.0,767.3 L251.0,766.6 L250.0,765.4 L249.0,766.1 L248.0,766.1 L247.0,766.4 L246.0,766.6 L245.0,767.1 L244.0,768.9 L243.0,769.1 L242.0,770.4 L241.0,771.2 L240.0,771.1 L239.0,771.6 L238.0,770.9 L237.0,770.8 L236.0,769.5 L235.0,769.8 L234.0,770.7 L233.0,770.7 L232.0,771.0 L231.0,770.3 L230.0,770.7 L229.0,770.4 L228.0,770.6 L227.0,771.1 L226.0,771.2 L225.0,770.8 L224.0,771.3 L223.0,770.5 L222.0,769.7 L221.0,769.5 L220.0,770.1 L219.0,769.7 L218.0,769.9 L217.0,768.7 L216.0,768.8 L215.0,768.9 L214.0,769.0 L213.0,768.8 L212.0,767.8 L211.0,767.0 L210.0,766.3 L209.0,765.4 L208.0,764.5 L207.0,764.2 L206.0,764.0 L205.0,763.7 L204.0,763.3 L203.0,763.3 L202.0,763.3 L201.0,763.3 L200.0,763.3 L199.0,763.3 L198.0,763.3 L197.0,763.3 L196.0,763.3 L195.0,763.3 L194.0,763.3 L193.0,763.3 L192.0,763.3 L191.0,763.3 L190.0,763.3 L189.0,763.3 L188.0,763.3 L187.0,763.3 L186.0,763.3 L185.0,763.3 L184.0,763.3 L183.0,763.7 L182.0,764.0 L181.0,764.2 L180.0,764.6 L179.0,765.0 L178.0,765.2 L177.0,765.7 L176.0,766.2 L175.0,766.2 L174.0,767.0 L173.0,767.3 L172.0,767.4 L171.0,767.8 L170.0,767.6 L169.0,768.0 L168.0,768.3 L167.0,768.2 L166.0,768.9 L165.0,768.8 L164.0,769.6 L163.0,769.1 L162.0,769.7 L161.0,770.0 L160.0,770.6 L159.0,771.0 L158.0,770.8 L157.0,770.2 L156.0,770.7 L155.0,769.9 L154.0,771.1 L153.0,770.7 L152.0,770.0 L151.0,770.6 L150.0,769.5 L149.0,769.8 L148.0,767.4 L147.0,764.6 L146.0,764.4 L145.0,764.7 L144.0,764.6 L143.0,763.7 L142.0,763.8 L141.0,764.3 L140.0,764.5 L139.0,765.9 L138.0,766.5 L137.0,767.6 L136.0,768.7 L135.0,769.4 L134.0,769.5 L133.0,769.5 L132.0,769.2 L131.0,768.8 L130.0,768.6 L129.0,768.5 L128.0,768.3 L127.0,767.3 L126.0,767.8 L125.0,767.6 L124.0,768.1 L123.0,769.0 L122.0,769.3 L121.0,769.6 L120.0,769.0 L119.0,769.3 L118.0,768.1 L117.0,768.4 L116.0,768.7 L115.0,768.5 L114.0,763.7 L113.0,764.1 L112.0,764.7 L111.0,765.4 L110.0,766.0 L109.0,766.3 L108.0,766.5 L107.0,766.9 L106.0,767.4 L105.0,767.1 L104.0,767.1 L103.0,767.4 L102.0,767.5 L101.0,767.3 L100.0,766.9 L99.0,766.2 L98.0,765.6 L97.0,764.6 L96.0,764.0 L95.0,763.3 L94.0,763.3 L93.0,763.3 L92.0,763.3 L91.0,763.3 L90.0,763.3 L89.0,763.3 L88.0,763.3 L87.0,763.3 L86.0,763.3 L85.0,763.3 L84.0,763.3 L83.0,763.3 L82.0,763.3 L81.0,763.3 L80.0,763.3 L79.0,763.3 L78.0,763.3 L77.0,763.3 L76.0,763.3 L75.0,763.3 L74.0,763.3 L73.0,763.3 L72.0,763.3 L71.0,763.3 L70.0,763.3 L69.0,763.3Z" fill="#6d6a75"/>
<path d="M69.0,762.1 L70.0,762.1 L71.0,762.1 L72.0,762.1 L73.0,762.1 L74.0,762.1 L75.0,762.1 L76.0,762.1 L77.0,762.1 L78.0,762.1 L79.0,762.1 L80.0,762.1 L81.0,762.1 L82.0,762.1 L83.0,762.1 L84.0,762.1 L85.0,762.1 L86.0,762.1 L87.0,762.1 L88.0,762.1 L89.0,762.1 L90.0,762.1 L91.0,762.1 L92.0,762.1 L93.0,762.1 L94.0,762.1 L95.0,762.1 L96.0,761.5 L97.0,760.8 L98.0,760.1 L99.0,759.0 L100.0,758.2 L101.0,758.1 L102.0,758.3 L103.0,758.5 L104.0,758.0 L105.0,757.8 L106.0,758.5 L107.0,758.9 L108.0,759.1 L109.0,759.2 L110.0,759.3 L111.0,760.2 L112.0,760.6 L113.0,761.2 L114.0,761.7 L115.0,757.1 L116.0,757.6 L117.0,757.3 L118.0,757.3 L119.0,756.8 L120.0,755.9 L121.0,756.7 L122.0,756.5 L123.0,756.7 L124.0,757.1 L125.0,757.2 L126.0,757.4 L127.0,757.9 L128.0,757.5 L129.0,756.6 L130.0,755.9 L131.0,756.5 L132.0,756.5 L133.0,755.8 L134.0,755.9 L135.0,755.9 L136.0,756.4 L137.0,757.8 L138.0,758.3 L139.0,759.6 L140.0,760.8 L141.0,761.0 L142.0,761.5 L143.0,761.7 L144.0,760.8 L145.0,760.8 L146.0,761.0 L147.0,761.0 L148.0,758.1 L149.0,755.6 L150.0,755.0 L151.0,755.5 L152.0,755.6 L153.0,754.6 L154.0,755.3 L155.0,754.7 L156.0,754.3 L157.0,755.3 L158.0,755.0 L159.0,755.4 L160.0,755.5 L161.0,755.4 L162.0,755.1 L163.0,755.8 L164.0,756.1 L165.0,755.9 L166.0,756.1 L167.0,756.9 L168.0,756.6 L169.0,756.9 L170.0,757.7 L171.0,758.2 L172.0,758.5 L173.0,758.4 L174.0,758.8 L175.0,758.9 L176.0,759.6 L177.0,759.9 L178.0,759.9 L179.0,760.5 L180.0,760.8 L181.0,761.1 L182.0,761.5 L183.0,761.7 L184.0,762.1 L185.0,762.1 L186.0,762.1 L187.0,762.1 L188.0,762.1 L189.0,762.1 L190.0,762.1 L191.0,762.1 L192.0,762.1 L193.0,762.1 L194.0,762.1 L195.0,762.1 L196.0,762.1 L197.0,762.1 L198.0,762.1 L199.0,762.1 L200.0,762.1 L201.0,762.1 L202.0,762.1 L203.0,762.1 L204.0,762.1 L205.0,761.8 L206.0,761.4 L207.0,761.1 L208.0,761.0 L209.0,759.9 L210.0,759.4 L211.0,758.0 L212.0,757.8 L213.0,756.9 L214.0,756.7 L215.0,756.1 L216.0,756.8 L217.0,756.0 L218.0,755.4 L219.0,755.3 L220.0,756.0 L221.0,755.7 L222.0,755.1 L223.0,755.6 L224.0,754.3 L225.0,754.2 L226.0,753.7 L227.0,754.6 L228.0,755.1 L229.0,754.8 L230.0,755.0 L231.0,754.5 L232.0,754.4 L233.0,754.9 L234.0,755.6 L235.0,755.2 L236.0,755.3 L237.0,754.5 L238.0,754.3 L239.0,754.4 L240.0,754.1 L241.0,753.9 L242.0,754.1 L243.0,756.2 L244.0,756.6 L245.0,758.4 L246.0,758.2 L247.0,759.0 L248.0,759.4 L249.0,759.5 L250.0,759.9 L251.0,758.8 L252.0,757.8 L253.0,757.7 L254.0,755.7 L255.0,755.7 L256.0,755.0 L257.0,754.6 L258.0,755.4 L259.0,755.5 L260.0,755.6 L261.0,755.1 L262.0,754.8 L263.0,755.0 L264.0,755.8 L265.0,755.4 L266.0,754.2 L267.0,754.0 L268.0,754.7 L269.0,756.7 L270.0,759.6 L271.0,761.7 L272.0,758.9 L273.0,755.5 L274.0,754.5 L275.0,754.7 L276.0,754.9 L277.0,754.3 L278.0,755.3 L279.0,754.9 L280.0,754.9 L281.0,755.0 L282.0,754.6 L283.0,754.7 L284.0,756.0 L285.0,755.5 L286.0,758.2 L287.0,761.7 L288.0,755.4 L289.0,756.4 L290.0,756.1 L291.0,755.9 L292.0,757.5 L293.0,759.2 L294.0,760.8 L295.0,760.2 L296.0,759.7 L297.0,759.0 L298.0,758.5 L299.0,758.0 L300.0,757.6 L301.0,757.4 L302.0,757.1 L303.0,756.8 L304.0,756.1 L305.0,756.7 L306.0,755.9 L307.0,755.7 L308.0,755.8 L309.0,755.8 L310.0,756.0 L311.0,756.0 L312.0,756.1 L313.0,756.4 L314.0,757.0 L315.0,757.7 L316.0,758.9 L317.0,758.9 L318.0,759.0 L319.0,758.2 L320.0,757.9 L321.0,757.9 L322.0,756.9 L323.0,757.3 L324.0,756.6 L325.0,756.5 L326.0,757.1 L327.0,756.6 L328.0,757.1 L329.0,757.1 L330.0,756.8 L331.0,756.1 L332.0,756.9 L333.0,756.2 L334.0,757.0 L335.0,756.3 L336.0,756.6 L337.0,757.1 L338.0,756.7 L339.0,756.7 L340.0,757.5 L341.0,757.1 L342.0,757.0 L343.0,758.2 L344.0,759.3 L345.0,759.9 L346.0,760.7 L347.0,761.7 L348.0,761.7 L349.0,761.7 L350.0,761.7 L351.0,761.7 L352.0,759.9 L353.0,758.6 L354.0,757.7 L355.0,758.3 L356.0,757.9 L357.0,758.3 L358.0,757.7 L359.0,757.9 L360.0,759.4 L361.0,759.9 L362.0,760.8 L363.0,760.4 L364.0,760.0 L365.0,758.8 L366.0,758.7 L367.0,757.5 L368.0,757.3 L369.0,757.8 L370.0,757.0 L371.0,757.5 L372.0,757.0 L373.0,757.7 L374.0,756.9 L375.0,757.5 L376.0,757.2 L377.0,757.4 L378.0,756.9 L379.0,756.8 L380.0,757.4 L381.0,756.8 L382.0,757.5 L383.0,757.1 L384.0,757.1 L385.0,756.7 L386.0,757.2 L387.0,756.9 L388.0,757.5 L389.0,756.8 L390.0,758.6 L391.0,759.7 L392.0,760.7 L393.0,760.5 L394.0,760.3 L395.0,760.0 L396.0,759.8 L397.0,759.2 L398.0,758.2 L399.0,758.3 L400.0,757.7 L401.0,757.5 L402.0,757.2 L403.0,757.5 L404.0,756.9 L405.0,757.2 L406.0,756.1 L407.0,756.4 L408.0,756.0 L409.0,757.0 L410.0,756.8 L411.0,756.2 L412.0,756.7 L413.0,756.4 L414.0,756.5 L415.0,756.4 L416.0,756.4 L417.0,757.4 L418.0,756.9 L419.0,757.6 L420.0,757.7 L421.0,757.9 L422.0,759.0 L423.0,759.6 L424.0,760.4 L425.0,761.4 L426.0,761.5 L427.0,761.4 L428.0,761.6 L429.0,761.7 L430.0,761.6 L431.0,761.6 L432.0,761.7 L433.0,761.7 L434.0,761.7 L435.0,761.7 L436.0,761.7 L437.0,761.7 L438.0,761.7 L439.0,761.7 L440.0,761.7 L441.0,761.7 L442.0,761.7 L443.0,761.7 L444.0,761.7 L445.0,761.7 L446.0,761.7 L447.0,761.7 L448.0,761.7 L449.0,761.7 L450.0,761.7 L451.0,761.7 L452.0,761.7 L453.0,761.7 L454.0,761.7 L455.0,761.7 L456.0,761.7 L457.0,761.7 L458.0,761.7 L459.0,761.7 L460.0,751.5 L461.0,754.1 L462.0,756.9 L463.0,757.7 L464.0,758.1 L465.0,758.9 L466.0,759.3 L467.0,759.1 L468.0,758.7 L469.0,759.1 L470.0,758.9 L471.0,758.4 L472.0,758.8 L473.0,758.1 L474.0,758.6 L475.0,757.8 L476.0,757.3 L477.0,756.3 L478.0,755.4 L479.0,755.1 L480.0,755.3 L481.0,755.7 L482.0,756.5 L483.0,756.1 L484.0,756.2 L485.0,756.5 L486.0,755.8 L487.0,757.3 L488.0,758.7 L489.0,760.1 L490.0,758.0 L491.0,756.6 L492.0,756.5 L493.0,757.1 L494.0,757.3 L495.0,757.5 L496.0,758.5 L497.0,757.8 L498.0,758.0 L499.0,756.7 L500.0,757.5 L501.0,756.3 L502.0,756.8 L503.0,755.8 L504.0,756.2 L505.0,756.5 L506.0,757.2 L507.0,756.5 L508.0,757.0 L509.0,757.5 L510.0,757.5 L511.0,757.7 L512.0,757.5 L513.0,758.5 L514.0,759.1 L515.0,758.8 L516.0,758.9 L517.0,758.0 L518.0,757.1 L519.0,756.6 L520.0,756.0 L521.0,756.0 L522.0,756.5 L523.0,756.5 L524.0,757.1 L525.0,756.9 L526.0,757.6 L527.0,757.2 L528.0,756.7 L529.0,755.7 L530.0,755.0 L531.0,755.1 L532.0,753.0 L533.0,753.4 L534.0,752.4 L535.0,751.1 L536.0,751.1 L537.0,750.7 L538.0,750.7 L539.0,750.6 L540.0,748.7 L541.0,748.3 L542.0,748.9 L543.0,745.9 L544.0,750.4 L545.0,752.4 L546.0,753.7 L547.0,757.2 L548.0,760.0 L549.0,760.2 L550.0,759.8 L551.0,760.2 L552.0,760.1 L553.0,759.8 L554.0,759.2 L555.0,758.4 L556.0,758.1 L557.0,758.7 L558.0,759.4 L559.0,760.2 L560.0,761.0 L561.0,760.8 L562.0,760.5 L563.0,759.9 L564.0,759.6 L565.0,759.5 L566.0,758.9 L567.0,758.9 L568.0,758.2 L569.0,758.0 L570.0,758.5 L571.0,759.5 L572.0,760.7 L573.0,761.7 L574.0,761.0 L575.0,760.4 L576.0,759.6 L577.0,759.2 L578.0,759.3 L579.0,758.9 L580.0,758.6 L581.0,758.7 L582.0,758.5 L583.0,758.6 L584.0,758.3 L585.0,758.0 L586.0,758.5 L587.0,758.5 L588.0,758.7 L589.0,758.4 L590.0,758.4 L591.0,758.5 L592.0,758.9 L593.0,758.6 L594.0,758.7 L595.0,760.0 L596.0,760.8 L597.0,761.7 L598.0,761.7 L599.0,761.7 L600.0,761.7 L601.0,755.5 L602.0,749.3 L603.0,749.5 L604.0,749.6 L605.0,748.2 L606.0,753.9 L607.0,758.0 L608.0,760.0 L609.0,761.7 L610.0,761.0 L611.0,759.9 L612.0,758.9 L613.0,759.9 L614.0,760.1 L615.0,760.9 L616.0,761.0 L617.0,761.0 L618.0,760.9 L619.0,760.8 L620.0,760.8 L621.0,760.7 L622.0,760.7 L623.0,761.1 L624.0,761.5 L625.0,761.7 L626.0,761.0 L627.0,760.1 L628.0,759.0 L629.0,757.9 L630.0,757.2 L631.0,756.1 L632.0,755.6 L633.0,753.8 L634.0,753.9 L635.0,753.9 L636.0,754.3 L637.0,754.6 L638.0,753.4 L639.0,753.7 L640.0,754.1 L641.0,753.1 L642.0,753.1 L643.0,754.6 L644.0,753.6 L645.0,754.6 L646.0,754.6 L647.0,754.6 L648.0,754.9 L649.0,754.4 L650.0,754.6 L651.0,754.0 L652.0,754.2 L653.0,754.1 L654.0,754.9 L655.0,757.6 L656.0,758.8 L657.0,758.1 L658.0,756.4 L659.0,754.6 L660.0,753.4 L661.0,756.8 L662.0,758.8 L663.0,761.7 L664.0,761.7 L665.0,761.7 L666.0,761.7 L667.0,761.7 L668.0,761.7 L669.0,761.7 L670.0,760.4 L671.0,758.8 L672.0,759.3 L673.0,759.3 L674.0,758.9 L675.0,758.9 L676.0,758.9 L677.0,758.8 L678.0,759.2 L679.0,758.9 L680.0,759.4 L681.0,759.6 L682.0,760.5 L683.0,761.0 L684.0,761.7 L685.0,761.2 L686.0,761.0 L687.0,760.3 L688.0,759.9 L689.0,759.6 L690.0,759.0 L691.0,758.7 L692.0,759.0 L693.0,759.0 L694.0,759.4 L695.0,759.1 L696.0,759.1 L697.0,758.8 L698.0,759.1 L699.0,758.9 L700.0,759.2 L701.0,759.5 L702.0,760.3 L703.0,761.1 L704.0,761.7 L705.0,759.6 L706.0,757.0 L707.0,755.2 L708.0,753.5 L709.0,751.9 L710.0,751.6 L711.0,752.2 L712.0,751.6 L713.0,751.7 L714.0,752.8 L715.0,752.5 L716.0,752.5 L717.0,750.5 L718.0,750.7 L719.0,751.0 L720.0,750.8 L721.0,750.5 L722.0,749.8 L723.0,748.9 L724.0,749.0 L725.0,749.1 L726.0,749.3 L727.0,749.1 L728.0,750.5 L729.0,752.3 L730.0,754.6 L731.0,755.9 L732.0,754.7 L733.0,755.1 L734.0,754.9 L735.0,755.2 L736.0,756.0 L737.0,755.7 L738.0,755.5 L739.0,755.8 L740.0,755.3 L741.0,755.8 L742.0,755.2 L743.0,755.1 L744.0,755.4 L745.0,755.6 L746.0,757.3 L747.0,758.8 L748.0,760.1 L749.0,760.4 L750.0,761.0 L751.0,761.4 L752.0,761.7 L753.0,761.2 L754.0,760.4 L755.0,759.6 L756.0,758.9 L757.0,758.8 L758.0,758.9 L759.0,758.4 L760.0,758.3 L761.0,758.3 L762.0,758.4 L763.0,758.4 L764.0,758.4 L765.0,758.6 L766.0,757.9 L767.0,758.3 L768.0,758.2 L769.0,758.3 L770.0,758.5 L771.0,759.0 L772.0,758.9 L773.0,758.7 L774.0,759.2 L775.0,759.5 L776.0,760.5 L777.0,761.0 L778.0,761.7 L779.0,760.1 L780.0,758.6 L781.0,757.6 L782.0,757.6 L783.0,757.8 L784.0,757.1 L785.0,757.3 L786.0,758.0 L787.0,757.9 L788.0,757.8 L789.0,758.4 L790.0,757.8 L791.0,758.7 L792.0,759.7 L793.0,760.1 L794.0,761.2 L795.0,761.7 L796.0,759.8 L797.0,758.6 L798.0,758.0 L799.0,758.5 L800.0,757.9 L801.0,758.2 L802.0,757.9 L803.0,758.2 L804.0,758.6 L805.0,758.3 L806.0,757.8 L807.0,758.5 L808.0,758.1 L809.0,758.2 L810.0,758.0 L811.0,758.1 L812.0,758.4 L813.0,759.0 L814.0,758.9 L815.0,758.9 L816.0,759.1 L817.0,759.2 L818.0,759.5 L819.0,759.7 L820.0,759.8 L821.0,760.4 L822.0,760.4 L823.0,760.3 L824.0,760.7 L825.0,760.8 L826.0,761.2 L827.0,761.3 L828.0,761.5 L829.0,761.5 L830.0,761.7 L831.0,761.7 L832.0,761.7 L833.0,761.7 L834.0,761.7 L835.0,761.7 L836.0,761.7 L837.0,761.7 L838.0,761.7 L839.0,761.7 L840.0,761.7 L841.0,761.7 L842.0,761.7 L843.0,761.7 L844.0,761.7 L845.0,761.7 L846.0,761.7 L847.0,761.7 L848.0,761.7 L849.0,761.7 L850.0,759.1 L851.0,756.4 L852.0,754.7 L853.0,755.0 L854.0,753.6 L855.0,754.8 L856.0,754.2 L857.0,753.5 L858.0,755.5 L859.0,758.4 L860.0,761.0 L861.0,760.9 L862.0,760.9 L863.0,761.0 L864.0,760.9 L865.0,760.9 L866.0,760.9 L867.0,760.8 L868.0,758.9 L869.0,756.9 L870.0,754.8 L871.0,756.1 L872.0,755.0 L873.0,755.9 L874.0,755.0 L875.0,755.4 L876.0,754.8 L877.0,755.5 L878.0,755.6 L879.0,754.8 L880.0,755.0 L881.0,755.7 L882.0,755.2 L883.0,754.9 L884.0,754.9 L885.0,755.5 L886.0,754.7 L887.0,755.9 L888.0,755.7 L889.0,755.1 L890.0,755.8 L891.0,756.8 L892.0,758.4 L893.0,760.1 L894.0,761.7 L895.0,760.0 L896.0,757.5 L897.0,756.2 L898.0,753.4 L899.0,753.8 L900.0,753.7 L901.0,753.3 L902.0,754.4 L903.0,752.8 L904.0,753.6 L905.0,753.8 L906.0,753.5 L907.0,753.2 L908.0,753.8 L909.0,753.6 L910.0,753.0 L911.0,753.7 L912.0,753.8 L913.0,752.9 L914.0,753.1 L915.0,754.7 L916.0,754.6 L917.0,754.7 L918.0,754.1 L919.0,755.4 L920.0,755.5 L921.0,754.9 L922.0,754.8 L923.0,756.0 L924.0,756.6 L925.0,757.7 L926.0,758.5 L927.0,758.8 L928.0,758.8 L929.0,759.4 L930.0,759.5 L931.0,759.5 L932.0,759.7 L933.0,759.5 L934.0,760.0 L935.0,760.2 L936.0,760.5 L937.0,760.9 L938.0,761.0 L939.0,761.4 L940.0,761.7 L941.0,761.7 L942.0,761.7 L943.0,761.7 L944.0,761.7 L945.0,761.7 L946.0,761.7 L947.0,761.7 L948.0,761.7 L949.0,761.7 L950.0,761.7 L951.0,761.7 L952.0,761.7 L953.0,761.7 L954.0,761.7 L955.0,761.7 L956.0,761.7 L957.0,761.7 L958.0,761.7 L959.0,761.3 L960.0,760.8 L961.0,760.2 L962.0,759.6 L963.0,759.1 L964.0,758.1 L965.0,757.8 L966.0,757.0 L967.0,757.1 L968.0,756.9 L968.0,768.8 L967.0,768.3 L966.0,768.4 L965.0,767.2 L964.0,767.0 L963.0,766.7 L962.0,765.9 L961.0,765.4 L960.0,764.5 L959.0,764.3 L958.0,763.7 L957.0,763.7 L956.0,763.7 L955.0,763.7 L954.0,763.7 L953.0,763.7 L952.0,763.7 L951.0,763.7 L950.0,763.7 L949.0,763.7 L948.0,763.7 L947.0,763.7 L946.0,763.7 L945.0,763.7 L944.0,763.7 L943.0,763.7 L942.0,763.7 L941.0,763.7 L940.0,763.7 L939.0,763.9 L938.0,764.4 L937.0,764.8 L936.0,765.1 L935.0,765.2 L934.0,765.4 L933.0,765.7 L932.0,765.8 L931.0,765.8 L930.0,765.7 L929.0,766.2 L928.0,766.3 L927.0,766.5 L926.0,766.7 L925.0,767.6 L924.0,768.1 L923.0,769.8 L922.0,770.4 L921.0,769.4 L920.0,771.1 L919.0,770.3 L918.0,770.8 L917.0,771.0 L916.0,771.7 L915.0,771.1 L914.0,771.6 L913.0,772.4 L912.0,772.1 L911.0,772.5 L910.0,771.1 L909.0,771.0 L908.0,770.9 L907.0,771.2 L906.0,771.6 L905.0,771.0 L904.0,772.1 L903.0,772.4 L902.0,771.9 L901.0,772.4 L900.0,772.5 L899.0,771.8 L898.0,772.5 L897.0,770.3 L896.0,767.8 L895.0,765.6 L894.0,763.7 L893.0,765.0 L892.0,766.9 L891.0,768.8 L890.0,770.7 L889.0,769.5 L888.0,770.2 L887.0,770.0 L886.0,769.9 L885.0,769.8 L884.0,769.4 L883.0,770.5 L882.0,769.5 L881.0,769.7 L880.0,770.3 L879.0,770.0 L878.0,770.7 L877.0,769.7 L876.0,769.9 L875.0,770.0 L874.0,770.6 L873.0,770.5 L872.0,770.1 L871.0,769.7 L870.0,770.6 L869.0,768.5 L868.0,766.5 L867.0,764.5 L866.0,764.5 L865.0,764.4 L864.0,764.6 L863.0,764.4 L862.0,764.5 L861.0,764.4 L860.0,764.6 L859.0,767.0 L858.0,769.5 L857.0,771.7 L856.0,772.1 L855.0,770.9 L854.0,771.2 L853.0,770.8 L852.0,770.7 L851.0,768.9 L850.0,765.7 L849.0,763.7 L848.0,763.7 L847.0,763.7 L846.0,763.7 L845.0,763.7 L844.0,763.7 L843.0,763.7 L842.0,763.7 L841.0,763.7 L840.0,763.7 L839.0,763.7 L838.0,763.7 L837.0,763.7 L836.0,763.7 L835.0,763.7 L834.0,763.7 L833.0,763.7 L832.0,763.7 L831.0,763.7 L830.0,763.7 L829.0,763.9 L828.0,763.9 L827.0,764.2 L826.0,764.4 L825.0,764.5 L824.0,764.8 L823.0,765.1 L822.0,765.0 L821.0,765.4 L820.0,765.3 L819.0,765.4 L818.0,765.5 L817.0,766.3 L816.0,766.4 L815.0,766.5 L814.0,766.6 L813.0,767.1 L812.0,766.6 L811.0,767.0 L810.0,767.3 L809.0,767.0 L808.0,767.5 L807.0,767.4 L806.0,767.7 L805.0,767.2 L804.0,767.3 L803.0,767.5 L802.0,767.1 L801.0,767.3 L800.0,767.0 L799.0,767.3 L798.0,767.2 L797.0,767.1 L796.0,765.6 L795.0,763.7 L794.0,764.4 L793.0,765.1 L792.0,765.8 L791.0,766.5 L790.0,767.1 L789.0,767.7 L788.0,767.0 L787.0,767.6 L786.0,767.4 L785.0,767.4 L784.0,767.8 L783.0,767.7 L782.0,767.7 L781.0,767.9 L780.0,766.7 L779.0,765.1 L778.0,763.7 L777.0,764.2 L776.0,765.1 L775.0,765.7 L774.0,766.2 L773.0,766.4 L772.0,766.3 L771.0,766.7 L770.0,766.9 L769.0,767.1 L768.0,766.6 L767.0,766.8 L766.0,767.1 L765.0,766.8 L764.0,766.8 L763.0,767.1 L762.0,767.3 L761.0,766.7 L760.0,766.7 L759.0,766.6 L758.0,766.4 L757.0,766.5 L756.0,766.6 L755.0,765.6 L754.0,765.1 L753.0,764.2 L752.0,763.7 L751.0,764.1 L750.0,764.6 L749.0,765.0 L748.0,765.2 L747.0,767.3 L746.0,768.2 L745.0,770.1 L744.0,770.0 L743.0,770.5 L742.0,770.2 L741.0,770.7 L740.0,769.5 L739.0,770.1 L738.0,770.0 L737.0,769.9 L736.0,769.8 L735.0,769.8 L734.0,769.8 L733.0,769.8 L732.0,770.4 L731.0,770.1 L730.0,771.7 L729.0,772.8 L728.0,773.9 L727.0,776.3 L726.0,776.9 L725.0,777.1 L724.0,776.1 L723.0,775.7 L722.0,774.8 L721.0,774.6 L720.0,773.9 L719.0,774.0 L718.0,774.9 L717.0,774.5 L716.0,772.7 L715.0,774.3 L714.0,772.7 L713.0,774.1 L712.0,773.3 L711.0,772.8 L710.0,773.6 L709.0,772.6 L708.0,772.3 L707.0,769.9 L706.0,768.3 L705.0,765.7 L704.0,763.7 L703.0,764.2 L702.0,765.1 L701.0,765.9 L700.0,766.2 L699.0,766.6 L698.0,766.4 L697.0,766.3 L696.0,766.7 L695.0,766.3 L694.0,766.4 L693.0,766.2 L692.0,766.3 L691.0,766.3 L690.0,766.6 L689.0,766.1 L688.0,765.4 L687.0,765.2 L686.0,764.5 L685.0,763.9 L684.0,763.7 L683.0,764.2 L682.0,765.0 L681.0,765.6 L680.0,766.1 L679.0,766.5 L678.0,766.6 L677.0,766.1 L676.0,766.3 L675.0,766.5 L674.0,766.2 L673.0,766.0 L672.0,766.4 L671.0,766.6 L670.0,765.1 L669.0,763.7 L668.0,763.7 L667.0,763.7 L666.0,763.7 L665.0,763.7 L664.0,763.7 L663.0,763.7 L662.0,766.6 L661.0,768.9 L660.0,771.5 L659.0,771.2 L658.0,768.7 L657.0,768.1 L656.0,766.5 L655.0,768.0 L654.0,770.5 L653.0,771.6 L652.0,771.2 L651.0,770.7 L650.0,770.5 L649.0,771.7 L648.0,770.1 L647.0,770.8 L646.0,771.2 L645.0,771.2 L644.0,770.8 L643.0,772.2 L642.0,770.9 L641.0,771.8 L640.0,772.3 L639.0,772.3 L638.0,772.4 L637.0,771.6 L636.0,771.9 L635.0,770.9 L634.0,771.0 L633.0,771.3 L632.0,770.3 L631.0,768.8 L630.0,767.7 L629.0,767.5 L628.0,766.7 L627.0,765.6 L626.0,764.4 L625.0,763.7 L624.0,763.8 L623.0,764.3 L622.0,764.7 L621.0,764.7 L620.0,764.4 L619.0,764.3 L618.0,764.4 L617.0,764.6 L616.0,764.4 L615.0,764.4 L614.0,765.0 L613.0,765.8 L612.0,766.0 L611.0,765.4 L610.0,764.6 L609.0,763.7 L608.0,765.2 L607.0,767.6 L606.0,772.1 L605.0,776.0 L604.0,775.2 L603.0,776.7 L602.0,776.1 L601.0,769.8 L600.0,763.7 L599.0,763.7 L598.0,763.7 L597.0,763.7 L596.0,764.6 L595.0,765.7 L594.0,766.0 L593.0,766.8 L592.0,766.3 L591.0,766.4 L590.0,766.6 L589.0,767.2 L588.0,767.4 L587.0,767.2 L586.0,767.2 L585.0,767.4 L584.0,767.2 L583.0,767.3 L582.0,766.6 L581.0,767.1 L580.0,766.3 L579.0,766.7 L578.0,766.5 L577.0,766.0 L576.0,765.8 L575.0,765.0 L574.0,764.3 L573.0,763.7 L572.0,764.6 L571.0,765.8 L570.0,766.8 L569.0,767.4 L568.0,766.8 L567.0,766.9 L566.0,766.2 L565.0,766.1 L564.0,765.9 L563.0,765.3 L562.0,764.9 L561.0,764.9 L560.0,764.4 L559.0,765.4 L558.0,766.2 L557.0,766.3 L556.0,767.0 L555.0,766.7 L554.0,766.0 L553.0,765.4 L552.0,765.7 L551.0,765.2 L550.0,765.5 L549.0,765.3 L548.0,765.6 L547.0,769.1 L546.0,771.3 L545.0,774.1 L544.0,777.0 L543.0,779.1 L542.0,778.2 L541.0,777.4 L540.0,777.6 L539.0,774.9 L538.0,775.5 L537.0,774.6 L536.0,774.0 L535.0,773.2 L534.0,773.1 L533.0,773.1 L532.0,771.7 L531.0,770.9 L530.0,770.7 L529.0,769.1 L528.0,768.3 L527.0,767.7 L526.0,768.4 L525.0,768.7 L524.0,769.0 L523.0,769.1 L522.0,768.3 L521.0,769.3 L520.0,768.5 L519.0,768.4 L518.0,768.4 L517.0,767.6 L516.0,766.7 L515.0,766.2 L514.0,766.9 L513.0,767.4 L512.0,767.5 L511.0,767.6 L510.0,768.5 L509.0,768.1 L508.0,768.6 L507.0,768.9 L506.0,768.8 L505.0,768.8 L504.0,769.1 L503.0,768.9 L502.0,768.8 L501.0,768.3 L500.0,768.2 L499.0,768.5 L498.0,768.1 L497.0,767.1 L496.0,767.3 L495.0,767.9 L494.0,767.8 L493.0,768.7 L492.0,768.3 L491.0,769.7 L490.0,766.9 L489.0,765.5 L488.0,766.4 L487.0,768.0 L486.0,769.7 L485.0,769.8 L484.0,768.9 L483.0,769.7 L482.0,769.0 L481.0,769.1 L480.0,769.1 L479.0,770.5 L478.0,769.7 L477.0,769.0 L476.0,768.7 L475.0,767.7 L474.0,767.6 L473.0,766.9 L472.0,766.7 L471.0,766.5 L470.0,767.1 L469.0,767.0 L468.0,766.4 L467.0,766.5 L466.0,766.5 L465.0,766.9 L464.0,767.4 L463.0,767.9 L462.0,768.3 L461.0,771.3 L460.0,773.5 L459.0,763.7 L458.0,763.7 L457.0,763.7 L456.0,763.7 L455.0,763.7 L454.0,763.7 L453.0,763.7 L452.0,763.7 L451.0,763.7 L450.0,763.7 L449.0,763.7 L448.0,763.7 L447.0,763.7 L446.0,763.7 L445.0,763.7 L444.0,763.7 L443.0,763.7 L442.0,763.7 L441.0,763.7 L440.0,763.7 L439.0,763.7 L438.0,763.7 L437.0,763.7 L436.0,763.7 L435.0,763.7 L434.0,763.7 L433.0,763.7 L432.0,763.7 L431.0,763.8 L430.0,763.8 L429.0,763.8 L428.0,764.0 L427.0,763.9 L426.0,764.0 L425.0,764.1 L424.0,765.0 L423.0,765.8 L422.0,766.2 L421.0,767.7 L420.0,767.6 L419.0,768.5 L418.0,768.2 L417.0,768.4 L416.0,768.6 L415.0,769.0 L414.0,769.1 L413.0,768.6 L412.0,768.6 L411.0,768.4 L410.0,769.5 L409.0,768.9 L408.0,768.8 L407.0,769.2 L406.0,768.6 L405.0,768.6 L404.0,768.3 L403.0,768.3 L402.0,768.1 L401.0,768.1 L400.0,767.8 L399.0,767.1 L398.0,766.9 L397.0,766.2 L396.0,765.4 L395.0,765.1 L394.0,765.0 L393.0,764.6 L392.0,764.7 L391.0,765.6 L390.0,767.2 L389.0,767.9 L388.0,768.4 L387.0,767.7 L386.0,768.6 L385.0,768.6 L384.0,767.8 L383.0,767.9 L382.0,768.1 L381.0,768.1 L380.0,768.0 L379.0,768.2 L378.0,768.3 L377.0,768.2 L376.0,768.2 L375.0,768.4 L374.0,767.6 L373.0,768.1 L372.0,768.3 L371.0,767.8 L370.0,768.6 L369.0,768.5 L368.0,768.4 L367.0,767.8 L366.0,767.0 L365.0,766.1 L364.0,765.6 L363.0,765.0 L362.0,764.4 L361.0,765.2 L360.0,766.7 L359.0,767.1 L358.0,767.0 L357.0,767.2 L356.0,766.9 L355.0,766.9 L354.0,767.2 L353.0,767.6 L352.0,765.4 L351.0,763.7 L350.0,763.7 L349.0,763.7 L348.0,763.7 L347.0,763.7 L346.0,764.4 L345.0,765.3 L344.0,766.6 L343.0,767.2 L342.0,767.6 L341.0,767.8 L340.0,768.1 L339.0,768.1 L338.0,768.3 L337.0,769.1 L336.0,769.3 L335.0,768.9 L334.0,768.7 L333.0,769.5 L332.0,769.4 L331.0,769.3 L330.0,768.5 L329.0,769.1 L328.0,768.4 L327.0,768.7 L326.0,768.0 L325.0,768.5 L324.0,768.9 L323.0,768.0 L322.0,768.5 L321.0,768.3 L320.0,767.4 L319.0,767.2 L318.0,766.8 L317.0,766.3 L316.0,767.3 L315.0,767.5 L314.0,768.2 L313.0,768.7 L312.0,768.8 L311.0,769.0 L310.0,768.5 L309.0,769.3 L308.0,769.5 L307.0,769.7 L306.0,768.7 L305.0,769.3 L304.0,769.1 L303.0,768.5 L302.0,768.1 L301.0,768.3 L300.0,767.4 L299.0,767.3 L298.0,767.5 L297.0,766.8 L296.0,766.1 L295.0,765.4 L294.0,764.4 L293.0,766.0 L292.0,767.6 L291.0,768.5 L290.0,769.6 L289.0,770.3 L288.0,769.4 L287.0,763.7 L286.0,766.7 L285.0,770.1 L284.0,770.5 L283.0,770.5 L282.0,769.8 L281.0,771.2 L280.0,770.7 L279.0,771.3 L278.0,771.4 L277.0,770.7 L276.0,769.9 L275.0,770.5 L274.0,769.6 L273.0,769.7 L272.0,766.7 L271.0,763.7 L270.0,766.3 L269.0,768.7 L268.0,771.2 L267.0,771.0 L266.0,770.7 L265.0,770.7 L264.0,769.7 L263.0,770.6 L262.0,770.1 L261.0,770.4 L260.0,769.9 L259.0,769.9 L258.0,771.2 L257.0,770.3 L256.0,771.3 L255.0,770.6 L254.0,769.2 L253.0,767.9 L252.0,767.3 L251.0,766.6 L250.0,765.4 L249.0,766.1 L248.0,766.1 L247.0,766.4 L246.0,766.6 L245.0,767.1 L244.0,768.9 L243.0,769.1 L242.0,770.4 L241.0,771.2 L240.0,771.1 L239.0,771.6 L238.0,770.9 L237.0,770.8 L236.0,769.5 L235.0,769.8 L234.0,770.7 L233.0,770.7 L232.0,771.0 L231.0,770.3 L230.0,770.7 L229.0,770.4 L228.0,770.6 L227.0,771.1 L226.0,771.2 L225.0,770.8 L224.0,771.3 L223.0,770.5 L222.0,769.7 L221.0,769.5 L220.0,770.1 L219.0,769.7 L218.0,769.9 L217.0,768.7 L216.0,768.8 L215.0,768.9 L214.0,769.0 L213.0,768.8 L212.0,767.8 L211.0,767.0 L210.0,766.3 L209.0,765.4 L208.0,764.5 L207.0,764.2 L206.0,764.0 L205.0,763.7 L204.0,763.3 L203.0,763.3 L202.0,763.3 L201.0,763.3 L200.0,763.3 L199.0,763.3 L198.0,763.3 L197.0,763.3 L196.0,763.3 L195.0,763.3 L194.0,763.3 L193.0,763.3 L192.0,763.3 L191.0,763.3 L190.0,763.3 L189.0,763.3 L188.0,763.3 L187.0,763.3 L186.0,763.3 L185.0,763.3 L184.0,763.3 L183.0,763.7 L182.0,764.0 L181.0,764.2 L180.0,764.6 L179.0,765.0 L178.0,765.2 L177.0,765.7 L176.0,766.2 L175.0,766.2 L174.0,767.0 L173.0,767.3 L172.0,767.4 L171.0,767.8 L170.0,767.6 L169.0,768.0 L168.0,768.3 L167.0,768.2 L166.0,768.9 L165.0,768.8 L164.0,769.6 L163.0,769.1 L162.0,769.7 L161.0,770.0 L160.0,770.6 L159.0,771.0 L158.0,770.8 L157.0,770.2 L156.0,770.7 L155.0,769.9 L154.0,771.1 L153.0,770.7 L152.0,770.0 L151.0,770.6 L150.0,769.5 L149.0,769.8 L148.0,767.4 L147.0,764.6 L146.0,764.4 L145.0,764.7 L144.0,764.6 L143.0,763.7 L142.0,763.8 L141.0,764.3 L140.0,764.5 L139.0,765.9 L138.0,766.5 L137.0,767.6 L136.0,768.7 L135.0,769.4 L134.0,769.5 L133.0,769.5 L132.0,769.2 L131.0,768.8 L130.0,768.6 L129.0,768.5 L128.0,768.3 L127.0,767.3 L126.0,767.8 L125.0,767.6 L124.0,768.1 L123.0,769.0 L122.0,769.3 L121.0,769.6 L120.0,769.0 L119.0,769.3 L118.0,768.1 L117.0,768.4 L116.0,768.7 L115.0,768.5 L114.0,763.7 L113.0,764.1 L112.0,764.7 L111.0,765.4 L110.0,766.0 L109.0,766.3 L108.0,766.5 L107.0,766.9 L106.0,767.4 L105.0,767.1 L104.0,767.1 L103.0,767.4 L102.0,767.5 L101.0,767.3 L100.0,766.9 L99.0,766.2 L98.0,765.6 L97.0,764.6 L96.0,764.0 L95.0,763.3 L94.0,763.3 L93.0,763.3 L92.0,763.3 L91.0,763.3 L90.0,763.3 L89.0,763.3 L88.0,763.3 L87.0,763.3 L86.0,763.3 L85.0,763.3 L84.0,763.3 L83.0,763.3 L82.0,763.3 L81.0,763.3 L80.0,763.3 L79.0,763.3 L78.0,763.3 L77.0,763.3 L76.0,763.3 L75.0,763.3 L74.0,763.3 L73.0,763.3 L72.0,763.3 L71.0,763.3 L70.0,763.3 L69.0,763.3Z" fill="#6f6a8c" clip-path="url(#selclip)"/>
</g>
<rect x="93.8" y="752.5" width="5" height="20" rx="2.5" fill="#cfc8ff" stroke="#7a6bea" stroke-width="1.4"/>
<rect x="561" y="752.5" width="5" height="20" rx="2.5" fill="#cfc8ff" stroke="#7a6bea" stroke-width="1.4"/>
<rect x="978" y="55.5" width="214" height="737" rx="7" fill="#17151e"/>
<text x="995" y="86.2" font-size="13" font-weight="bold" fill="#f2f1f6" letter-spacing="0.5">TRACKS</text>
<rect x="1161.5" y="80.8" width="11.5" height="1.5" fill="#9693a0"/>
<rect x="995.6" y="103.6" width="180" height="29.4" rx="4" fill="#33303f" stroke="#6e5ed6" stroke-width="1.4"/>
<text class="m" color="#ecebf1" x="1006" y="122.8" font-size="14" fill="#ecebf1">Lead vocal</text>
<circle cx="1156.5" cy="118" r="4.2" fill="#8c8995"/>
<rect x="995" y="149.6" width="181" height="1.3" fill="#302d3a"/>
<text x="995" y="181" font-size="13" font-weight="bold" fill="#f2f1f6" letter-spacing="0.5">SCALE</text>
<rect x="1161.5" y="175.3" width="11.5" height="1.5" fill="#9693a0"/>
<rect x="995" y="198.3" width="181" height="25.3" rx="3" fill="#302d3c"/>
<text class="m" color="#e9e8ee" x="1004" y="215.4" font-size="14" fill="#e9e8ee">F Harmonic Minor</text>
<path d="M1152.5,208.5 L1158.6,214.3 L1164.7,208.5" fill="none" stroke="#8f8c99" stroke-width="1.3"/>
<text class="m" color="#e9e8ee" x="995" y="250" font-size="14" fill="#e9e8ee" letter-spacing="0.15">Snap to scale notes</text>
<rect x="1150.6" y="239" width="25.6" height="12.6" rx="6.3" fill="#2c2a37"/>
<circle cx="1156.8" cy="245.3" r="4.6" fill="#ffffff"/>
<rect x="995" y="269.8" width="181" height="1.3" fill="#302d3a"/>
<rect x="995" y="749.8" width="26" height="26" rx="1" fill="#353242"/>
<path d="M1004.5,756.8 L1010.4,762.7 L1004.5,768.6" fill="none" stroke="#ffffff" stroke-width="1.5" stroke-linecap="round" stroke-linejoin="round"/>
</svg></body></html>
